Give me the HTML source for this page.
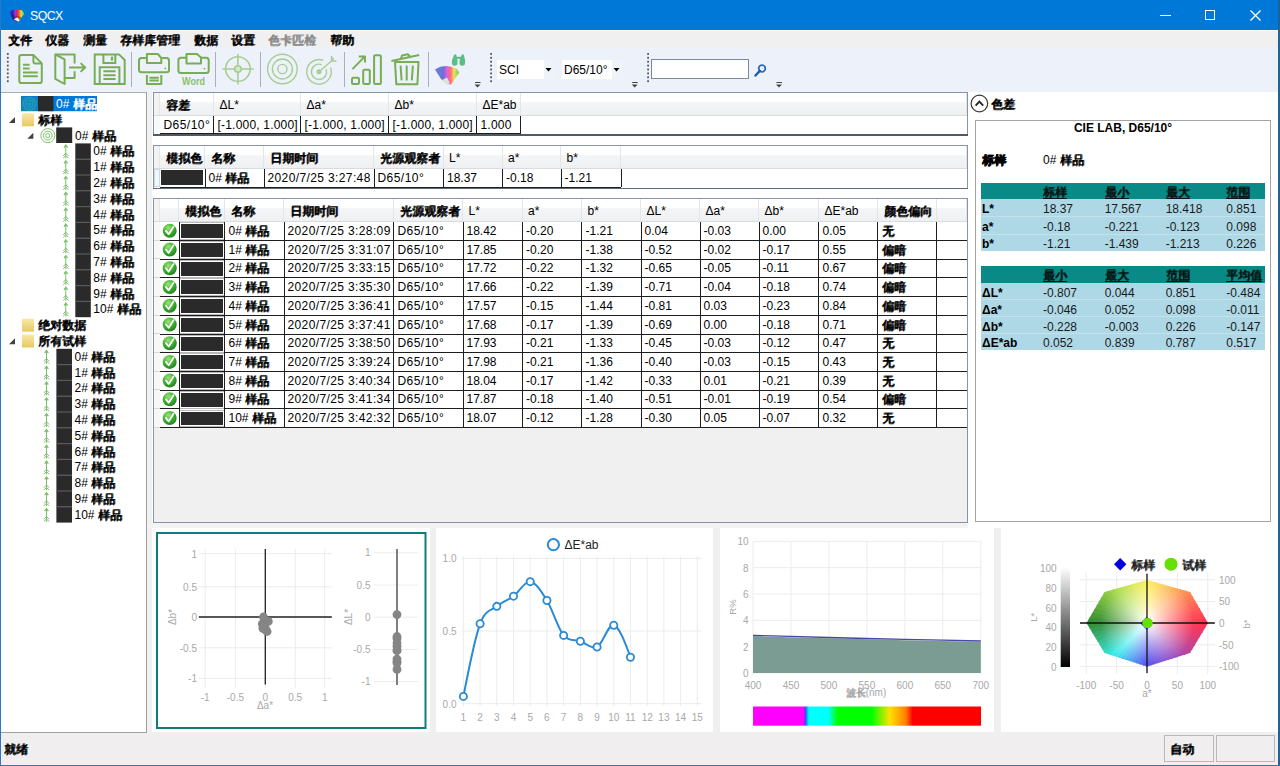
<!DOCTYPE html><html><head><meta charset="utf-8"><title>SQCX</title><style>
*{margin:0;padding:0;box-sizing:border-box}
html,body{width:1280px;height:766px;overflow:hidden}
body{position:relative;background:#f0f0f0;font-family:"Liberation Sans",sans-serif;font-size:12px;color:#000;line-height:1}
.a{position:absolute}
.t{position:absolute;white-space:nowrap}
svg{position:absolute;overflow:visible}
.c{display:inline-block;width:1em;text-align:center;text-shadow:1px 0 0 currentColor,0 1px 0 currentColor}
</style></head><body>
<div class="a" style="left:0px;top:0px;width:1280px;height:30px;background:#0078d7"></div>
<svg style="left:0;top:0" width="40" height="30">
<defs><linearGradient id="ig" gradientUnits="userSpaceOnUse" x1="9" y1="0" x2="24" y2="0">
<stop offset="0" stop-color="#3050e8"/><stop offset=".25" stop-color="#2020b0"/><stop offset=".42" stop-color="#b030e0"/><stop offset=".55" stop-color="#e02040"/><stop offset=".7" stop-color="#f08020"/><stop offset=".8" stop-color="#e0e030"/><stop offset="1" stop-color="#50d850"/></linearGradient>
<linearGradient id="ig2" x1="0" y1="0" x2="0" y2="1"><stop offset="0" stop-color="#000" stop-opacity="0"/><stop offset="1" stop-color="#000" stop-opacity=".55"/></linearGradient></defs>
<path d="M9.2,12.3 Q11,9.8 13.2,9.9 L21.2,9.9 Q23.6,11 24.1,14 L19.5,20.5 L17.5,22 L13,19.5 Z" fill="url(#ig)"/>
<path d="M9.2,12.3 L13,19.5 L17.5,22 L19.5,20.5 L24.1,14 L22,17 L13,15 Z" fill="url(#ig2)"/>
<path d="M13.8,19.2 L17.5,17.2 L19.8,20.1 L18.4,21.7 Z" fill="#f4f4f4"/>
</svg>
<div class="t" style="left:30px;top:9.5px;color:#fff;font-size:12.3px;letter-spacing:-0.55px">SQCX</div>
<svg style="left:1140px;top:0" width="140" height="30">
<line x1="20" y1="15.5" x2="31" y2="15.5" stroke="#fff" stroke-width="1"/>
<rect x="65.5" y="10.5" width="9" height="9" fill="none" stroke="#fff" stroke-width="1"/>
<path d="M110.5,10.5 L120.5,20.5 M120.5,10.5 L110.5,20.5" stroke="#fff" stroke-width="1.3"/>
</svg>
<div class="a" style="left:1px;top:30px;width:1277px;height:1px;background:#f7fbff"></div>
<div class="a" style="left:1px;top:31px;width:1277px;height:16px;background:#f0f0f0"></div>
<div class="t" style="left:8px;top:34px;color:#000"><span class="c">文</span><span class="c">件</span></div>
<div class="t" style="left:45px;top:34px;color:#000"><span class="c">仪</span><span class="c">器</span></div>
<div class="t" style="left:83px;top:34px;color:#000"><span class="c">测</span><span class="c">量</span></div>
<div class="t" style="left:120px;top:34px;color:#000"><span class="c">存</span><span class="c">样</span><span class="c">库</span><span class="c">管</span><span class="c">理</span></div>
<div class="t" style="left:194px;top:34px;color:#000"><span class="c">数</span><span class="c">据</span></div>
<div class="t" style="left:231px;top:34px;color:#000"><span class="c">设</span><span class="c">置</span></div>
<div class="t" style="left:268px;top:34px;color:#8a8a8a"><span class="c">色</span><span class="c">卡</span><span class="c">匹</span><span class="c">检</span></div>
<div class="t" style="left:330px;top:34px;color:#000"><span class="c">帮</span><span class="c">助</span></div>
<div class="a" style="left:1px;top:47px;width:1277px;height:45px;background:#edf2fa"></div>
<svg style="left:0;top:0" width="800" height="95"><rect x="6.9" y="53" width="1.8" height="1.8" fill="#555"/><rect x="6.9" y="56.9" width="1.8" height="1.8" fill="#555"/><rect x="6.9" y="60.8" width="1.8" height="1.8" fill="#555"/><rect x="6.9" y="64.7" width="1.8" height="1.8" fill="#555"/><rect x="6.9" y="68.60000000000001" width="1.8" height="1.8" fill="#555"/><rect x="6.9" y="72.50000000000001" width="1.8" height="1.8" fill="#555"/><rect x="6.9" y="76.40000000000002" width="1.8" height="1.8" fill="#555"/><rect x="6.9" y="80.30000000000003" width="1.8" height="1.8" fill="#555"/><g fill="none" stroke="#77ad55" stroke-width="2" stroke-linejoin="round" stroke-linecap="butt">
<path d="M21.5,55 H33.4 L41.8,63.4 V81 Q41.8,83.1 39.7,83.1 H21.5 Q19.3,83.1 19.3,81 V57.2 Q19.3,55 21.5,55 Z"/>
<path d="M33.4,55 V61.4 Q33.4,63.4 35.4,63.4 H41.8"/>
<path d="M23,64.7 H29.6 M23,68.4 H29.6 M23,72.5 H37.8 M23,76.2 H37.8"/>
</g><g fill="none" stroke="#77ad55" stroke-width="2" stroke-linejoin="round">
<path d="M55.3,54.4 L64.6,59.4 V84 L55.3,78.8 Z"/>
<path d="M55.3,54.4 H74.6 V63.4 M74.6,71.3 V78.1 H64.6"/>
<path d="M69,67.5 H85 M80.6,63.1 L85.2,67.5 L80.6,71.9"/>
</g><g fill="none" stroke="#77ad55" stroke-width="2" stroke-linejoin="miter">
<path d="M94.7,54.4 H119 L124.7,60 V84 H94.7 Z"/>
<path d="M103.4,54.4 V63.1 H115.3 V54.4"/>
<path d="M99.7,84 V67.2 H119.4 V84"/>
<path d="M103.4,71.3 H115.6 M103.4,75.3 H115.6 M103.4,79 H115.6"/>
<path d="M112,56.6 V60.6" stroke-width="2.2"/>
</g><line x1="131.5" y1="52" x2="131.5" y2="87" stroke="#a9b0b9" stroke-width="1"/><g fill="none" stroke="#77ad55" stroke-width="2" stroke-linejoin="round">
<rect x="139" y="58.1" width="30" height="14.1" rx="2.5"/>
<path d="M146.9,58.1 V54 H157.8 L161.3,58 V63.1 H146.9 Z" fill="#eef3fa"/>
<path d="M146.9,75 V84 H161.3 V75"/>
<path d="M149.4,77.8 H158.8 M149.4,80.6 H158.8"/>
</g><circle cx="165.3" cy="68.4" r="0.9" fill="#77ad55"/><g fill="none" stroke="#77ad55" stroke-width="2" stroke-linejoin="round">
<rect x="178.4" y="57.7" width="30.3" height="15.2" rx="2.5"/>
<path d="M186.5,57.7 V53.9 H197 L201,57.4 V63.4 H186.5 Z" fill="#eef3fa"/>
</g><circle cx="204.5" cy="68.6" r="0.9" fill="#77ad55"/>
<text x="193.6" y="84.6" text-anchor="middle" font-family="Liberation Sans" font-weight="bold" font-size="11" fill="#8cbf6c" textLength="23" lengthAdjust="spacingAndGlyphs">Word</text><line x1="215.5" y1="52" x2="215.5" y2="87" stroke="#a9b0b9" stroke-width="1"/><g fill="none" stroke="#a8cc95" stroke-width="1.6">
<circle cx="237.9" cy="69" r="12.3"/>
<path d="M222.4,69 H253.7 M237.9,53.9 V84.5"/>
<circle cx="237.9" cy="69" r="3.3" fill="#d6e8ca"/>
</g><line x1="260.5" y1="52" x2="260.5" y2="87" stroke="#a9b0b9" stroke-width="1"/><g fill="none" stroke="#a8cc95" stroke-width="1.4">
<circle cx="282.4" cy="69" r="14.8"/><circle cx="282.4" cy="69" r="10"/><circle cx="282.4" cy="69" r="4.6"/>
</g><g fill="none" stroke="#a8cc95" stroke-width="1.4">
<path d="M330.56,67.59 A12.3,12.3 0 1 1 323.2,60.24"/>
<path d="M326.14,69.2 A7.6,7.6 0 1 1 321.6,64.66"/>
<circle cx="319" cy="71.8" r="1.8" fill="#a8cc95"/>
<path d="M319,71.8 L332.4,60.2 M331.5,56 V61 H336.5 M333,57.5 V60" />
</g><line x1="344.5" y1="52" x2="344.5" y2="87" stroke="#a9b0b9" stroke-width="1"/><g fill="none" stroke="#77ad55" stroke-width="2" stroke-linejoin="round">
<rect x="352" y="77.8" width="7" height="6.2" rx="1.2"/>
<rect x="363.2" y="69.7" width="6.6" height="14.3" rx="1.2"/>
<rect x="374.1" y="55.3" width="6.8" height="28.7" rx="1.2"/>
<path d="M352.4,69.1 L365,56.4 M358.7,56.4 H365 V62.4"/>
</g><g fill="none" stroke="#77ad55" stroke-width="2" stroke-linejoin="round">
<path d="M391.4,61 L419.2,55"/>
<path d="M401,58.6 L402,55.5 L408,54.3 L410,56.5"/>
<path d="M395,62 H418.5 L417.4,84.2 H396.3 Z"/>
<path d="M400.6,65.6 L401.6,80.4 M406.7,65.6 V80.4 M412.9,65.6 L411.8,80.4"/>
</g><line x1="428.5" y1="52" x2="428.5" y2="87" stroke="#a9b0b9" stroke-width="1"/><defs><linearGradient id="fan" x1="0" y1="0" x2="1" y2="0">
<stop offset="0" stop-color="#6080e0"/><stop offset=".35" stop-color="#7070d0"/><stop offset=".5" stop-color="#e060e0"/><stop offset=".65" stop-color="#ff7070"/><stop offset=".78" stop-color="#f0e060"/><stop offset="1" stop-color="#60d060"/></linearGradient></defs>
<path d="M435,69.5 Q445,63 457,69 L459.3,72.5 L451,84.5 L447,84 L441,79 Z" fill="url(#fan)"/>
<path d="M442,80 L447,77.5 L450,83.5 L446,84.3 Z" fill="#e0e0e0"/>
<path d="M454.2,54.5 h2 l1.3,6 v2.5 a2.8,2.8 0 0 1 -5.6,0 v-2.5 Z" fill="#5cbd86"/>
<path d="M461.8,54.5 h2 l1.3,6 v2.5 a2.8,2.8 0 0 1 -5.6,0 v-2.5 Z" fill="#5cbd86"/>
<rect x="456" y="56.8" width="6" height="2" fill="#5cbd86"/><rect x="475.0" y="82" width="5.5" height="1" fill="#444"/><path d="M474.5,84.5 L480.5,84.5 L477.5,87.5 Z" fill="#444"/><rect x="490.2" y="53" width="1.8" height="1.8" fill="#555"/><rect x="490.2" y="56.9" width="1.8" height="1.8" fill="#555"/><rect x="490.2" y="60.8" width="1.8" height="1.8" fill="#555"/><rect x="490.2" y="64.7" width="1.8" height="1.8" fill="#555"/><rect x="490.2" y="68.60000000000001" width="1.8" height="1.8" fill="#555"/><rect x="490.2" y="72.50000000000001" width="1.8" height="1.8" fill="#555"/><rect x="490.2" y="76.40000000000002" width="1.8" height="1.8" fill="#555"/><rect x="490.2" y="80.30000000000003" width="1.8" height="1.8" fill="#555"/><rect x="632.2" y="82" width="5.5" height="1" fill="#444"/><path d="M631.7,84.5 L637.7,84.5 L634.7,87.5 Z" fill="#444"/><rect x="647.2" y="53" width="1.8" height="1.8" fill="#555"/><rect x="647.2" y="56.9" width="1.8" height="1.8" fill="#555"/><rect x="647.2" y="60.8" width="1.8" height="1.8" fill="#555"/><rect x="647.2" y="64.7" width="1.8" height="1.8" fill="#555"/><rect x="647.2" y="68.60000000000001" width="1.8" height="1.8" fill="#555"/><rect x="647.2" y="72.50000000000001" width="1.8" height="1.8" fill="#555"/><rect x="647.2" y="76.40000000000002" width="1.8" height="1.8" fill="#555"/><rect x="647.2" y="80.30000000000003" width="1.8" height="1.8" fill="#555"/><rect x="776.5" y="82" width="5.5" height="1" fill="#444"/><path d="M776,84.5 L782,84.5 L779,87.5 Z" fill="#444"/><circle cx="762" cy="68.5" r="3.3" fill="none" stroke="#2a6cc0" stroke-width="1.8"/><path d="M759.7,71 L755.5,75.5" stroke="#1e5aa8" stroke-width="2.4" stroke-linecap="round"/></svg>
<div class="a" style="left:497px;top:60px;width:58px;height:19px;background:#fff"></div>
<div class="a" style="left:544px;top:60px;width:11px;height:19px;background:#eef3fa"></div>
<div class="t" style="left:499px;top:64px;font-size:12px">SCI</div>
<div class="a" style="left:562px;top:60px;width:61px;height:19px;background:#fff"></div>
<div class="a" style="left:612px;top:60px;width:11px;height:19px;background:#eef3fa"></div>
<div class="t" style="left:564px;top:64px;font-size:12px">D65/10°</div>
<div class="a" style="left:651px;top:59px;width:98px;height:20px;background:#fff;border:1px solid #7a8a9c"></div>
<svg style="left:0;top:0" width="1" height="1"><path d="M545.5,68 L551.5,68 L548.5,71.5 Z" fill="#000"/><path d="M613.5,68 L619.5,68 L616.5,71.5 Z" fill="#000"/></svg>
<div class="a" style="left:1px;top:92px;width:146px;height:641px;background:#fff;border-top:1px solid #a9aeb5;border-right:1px solid #a0a0a0;border-bottom:1px solid #a0a0a0"></div>
<svg style="left:0;top:0" width="150" height="740"><rect x="21" y="96" width="76" height="15.2" fill="#0078d7"/><rect x="21.5" y="96.5" width="16.5" height="14.5" fill="#1382c4"/><g fill="none" stroke="#22a0b4" stroke-width="1.3"><circle cx="29.5" cy="103.8" r="6.2"/><circle cx="29.5" cy="103.8" r="3.6"/><circle cx="29.5" cy="103.8" r="1.2"/></g><rect x="38" y="96" width="15.4" height="15.2" fill="#2a2a2a"/><defs><linearGradient id="fold" x1="0" y1="0" x2="0" y2="1"><stop offset="0" stop-color="#f8e9a8"/><stop offset="1" stop-color="#e8c860"/></linearGradient></defs><path d="M15,117.0 L15,123.0 L9,123.0 Z" fill="#404040"/><defs></defs><rect x="22" y="113.3" width="12" height="13" fill="url(#fold)"/><path d="M33.3,132.79999999999998 L33.3,138.79999999999998 L27.3,138.79999999999998 Z" fill="#404040"/><g fill="none" stroke="#7cc46a" stroke-width="1"><circle cx="47.8" cy="135.6" r="7"/><circle cx="47.8" cy="135.6" r="4.4"/><circle cx="47.8" cy="135.6" r="2"/></g><rect x="56.2" y="127.39999999999999" width="16" height="15.6" fill="#2a2a2a"/><g stroke="#7cbf68" stroke-width="1" fill="none"><path d="M65.8,144.9 V158.4"/><path d="M64.0,147.6 L65.8,145.20000000000002 L67.6,147.6" stroke-width="1.3"/><path d="M63.199999999999996,155.9 L65.8,153.20000000000002 L68.39999999999999,155.9 M63.199999999999996,158.20000000000002 L65.8,155.6 L68.39999999999999,158.20000000000002"/></g><rect x="75.3" y="143.4" width="15.5" height="15.8" fill="#2a2a2a"/><g stroke="#7cbf68" stroke-width="1" fill="none"><path d="M65.8,160.7 V174.2"/><path d="M64.0,163.39999999999998 L65.8,161.0 L67.6,163.39999999999998" stroke-width="1.3"/><path d="M63.199999999999996,171.7 L65.8,169.0 L68.39999999999999,171.7 M63.199999999999996,174.0 L65.8,171.39999999999998 L68.39999999999999,174.0"/></g><rect x="75.3" y="159.2" width="15.5" height="15.8" fill="#2a2a2a"/><rect x="75.3" y="158.6" width="15.5" height="1.2" fill="#5a5a5a"/><g stroke="#7cbf68" stroke-width="1" fill="none"><path d="M65.8,176.5 V190.0"/><path d="M64.0,179.2 L65.8,176.8 L67.6,179.2" stroke-width="1.3"/><path d="M63.199999999999996,187.5 L65.8,184.8 L68.39999999999999,187.5 M63.199999999999996,189.8 L65.8,187.2 L68.39999999999999,189.8"/></g><rect x="75.3" y="175.0" width="15.5" height="15.8" fill="#2a2a2a"/><rect x="75.3" y="174.4" width="15.5" height="1.2" fill="#5a5a5a"/><g stroke="#7cbf68" stroke-width="1" fill="none"><path d="M65.8,192.3 V205.8"/><path d="M64.0,195.0 L65.8,192.60000000000002 L67.6,195.0" stroke-width="1.3"/><path d="M63.199999999999996,203.3 L65.8,200.60000000000002 L68.39999999999999,203.3 M63.199999999999996,205.60000000000002 L65.8,203.0 L68.39999999999999,205.60000000000002"/></g><rect x="75.3" y="190.8" width="15.5" height="15.8" fill="#2a2a2a"/><rect x="75.3" y="190.2" width="15.5" height="1.2" fill="#5a5a5a"/><g stroke="#7cbf68" stroke-width="1" fill="none"><path d="M65.8,208.10000000000002 V221.60000000000002"/><path d="M64.0,210.8 L65.8,208.40000000000003 L67.6,210.8" stroke-width="1.3"/><path d="M63.199999999999996,219.10000000000002 L65.8,216.40000000000003 L68.39999999999999,219.10000000000002 M63.199999999999996,221.40000000000003 L65.8,218.8 L68.39999999999999,221.40000000000003"/></g><rect x="75.3" y="206.6" width="15.5" height="15.8" fill="#2a2a2a"/><rect x="75.3" y="206.0" width="15.5" height="1.2" fill="#5a5a5a"/><g stroke="#7cbf68" stroke-width="1" fill="none"><path d="M65.8,223.9 V237.4"/><path d="M64.0,226.6 L65.8,224.20000000000002 L67.6,226.6" stroke-width="1.3"/><path d="M63.199999999999996,234.9 L65.8,232.20000000000002 L68.39999999999999,234.9 M63.199999999999996,237.20000000000002 L65.8,234.6 L68.39999999999999,237.20000000000002"/></g><rect x="75.3" y="222.4" width="15.5" height="15.8" fill="#2a2a2a"/><rect x="75.3" y="221.8" width="15.5" height="1.2" fill="#5a5a5a"/><g stroke="#7cbf68" stroke-width="1" fill="none"><path d="M65.8,239.70000000000002 V253.20000000000002"/><path d="M64.0,242.4 L65.8,240.00000000000003 L67.6,242.4" stroke-width="1.3"/><path d="M63.199999999999996,250.70000000000002 L65.8,248.00000000000003 L68.39999999999999,250.70000000000002 M63.199999999999996,253.00000000000003 L65.8,250.4 L68.39999999999999,253.00000000000003"/></g><rect x="75.3" y="238.2" width="15.5" height="15.8" fill="#2a2a2a"/><rect x="75.3" y="237.6" width="15.5" height="1.2" fill="#5a5a5a"/><g stroke="#7cbf68" stroke-width="1" fill="none"><path d="M65.8,255.5 V269.0"/><path d="M64.0,258.2 L65.8,255.8 L67.6,258.2" stroke-width="1.3"/><path d="M63.199999999999996,266.5 L65.8,263.8 L68.39999999999999,266.5 M63.199999999999996,268.8 L65.8,266.2 L68.39999999999999,268.8"/></g><rect x="75.3" y="254.0" width="15.5" height="15.8" fill="#2a2a2a"/><rect x="75.3" y="253.4" width="15.5" height="1.2" fill="#5a5a5a"/><g stroke="#7cbf68" stroke-width="1" fill="none"><path d="M65.8,271.3 V284.8"/><path d="M64.0,274.0 L65.8,271.6 L67.6,274.0" stroke-width="1.3"/><path d="M63.199999999999996,282.3 L65.8,279.6 L68.39999999999999,282.3 M63.199999999999996,284.6 L65.8,282.0 L68.39999999999999,284.6"/></g><rect x="75.3" y="269.8" width="15.5" height="15.8" fill="#2a2a2a"/><rect x="75.3" y="269.2" width="15.5" height="1.2" fill="#5a5a5a"/><g stroke="#7cbf68" stroke-width="1" fill="none"><path d="M65.8,287.1 V300.6"/><path d="M64.0,289.8 L65.8,287.40000000000003 L67.6,289.8" stroke-width="1.3"/><path d="M63.199999999999996,298.1 L65.8,295.40000000000003 L68.39999999999999,298.1 M63.199999999999996,300.40000000000003 L65.8,297.8 L68.39999999999999,300.40000000000003"/></g><rect x="75.3" y="285.6" width="15.5" height="15.8" fill="#2a2a2a"/><rect x="75.3" y="285.0" width="15.5" height="1.2" fill="#5a5a5a"/><g stroke="#7cbf68" stroke-width="1" fill="none"><path d="M65.8,302.9 V316.4"/><path d="M64.0,305.59999999999997 L65.8,303.2 L67.6,305.59999999999997" stroke-width="1.3"/><path d="M63.199999999999996,313.9 L65.8,311.2 L68.39999999999999,313.9 M63.199999999999996,316.2 L65.8,313.59999999999997 L68.39999999999999,316.2"/></g><rect x="75.3" y="301.4" width="15.5" height="15.8" fill="#2a2a2a"/><rect x="75.3" y="300.8" width="15.5" height="1.2" fill="#5a5a5a"/><defs></defs><rect x="22" y="318.70000000000005" width="12" height="13" fill="url(#fold)"/><path d="M15,338.2 L15,344.2 L9,344.2 Z" fill="#404040"/><defs></defs><rect x="22" y="334.5" width="12" height="13" fill="url(#fold)"/><g stroke="#7cbf68" stroke-width="1" fill="none"><path d="M46.5,350.3 V363.8"/><path d="M44.7,353.0 L46.5,350.6 L48.3,353.0" stroke-width="1.3"/><path d="M43.9,361.3 L46.5,358.6 L49.1,361.3 M43.9,363.6 L46.5,361.0 L49.1,363.6"/></g><rect x="56.4" y="348.8" width="15.6" height="15.8" fill="#2a2a2a"/><g stroke="#7cbf68" stroke-width="1" fill="none"><path d="M46.5,366.1 V379.6"/><path d="M44.7,368.8 L46.5,366.40000000000003 L48.3,368.8" stroke-width="1.3"/><path d="M43.9,377.1 L46.5,374.40000000000003 L49.1,377.1 M43.9,379.40000000000003 L46.5,376.8 L49.1,379.40000000000003"/></g><rect x="56.4" y="364.6" width="15.6" height="15.8" fill="#2a2a2a"/><rect x="56.4" y="364.0" width="15.6" height="1.2" fill="#5a5a5a"/><g stroke="#7cbf68" stroke-width="1" fill="none"><path d="M46.5,381.90000000000003 V395.40000000000003"/><path d="M44.7,384.6 L46.5,382.20000000000005 L48.3,384.6" stroke-width="1.3"/><path d="M43.9,392.90000000000003 L46.5,390.20000000000005 L49.1,392.90000000000003 M43.9,395.20000000000005 L46.5,392.6 L49.1,395.20000000000005"/></g><rect x="56.4" y="380.4" width="15.6" height="15.8" fill="#2a2a2a"/><rect x="56.4" y="379.8" width="15.6" height="1.2" fill="#5a5a5a"/><g stroke="#7cbf68" stroke-width="1" fill="none"><path d="M46.5,397.7 V411.2"/><path d="M44.7,400.4 L46.5,398.0 L48.3,400.4" stroke-width="1.3"/><path d="M43.9,408.7 L46.5,406.0 L49.1,408.7 M43.9,411.0 L46.5,408.4 L49.1,411.0"/></g><rect x="56.4" y="396.2" width="15.6" height="15.8" fill="#2a2a2a"/><rect x="56.4" y="395.6" width="15.6" height="1.2" fill="#5a5a5a"/><g stroke="#7cbf68" stroke-width="1" fill="none"><path d="M46.5,413.5 V427.0"/><path d="M44.7,416.2 L46.5,413.8 L48.3,416.2" stroke-width="1.3"/><path d="M43.9,424.5 L46.5,421.8 L49.1,424.5 M43.9,426.8 L46.5,424.2 L49.1,426.8"/></g><rect x="56.4" y="412.0" width="15.6" height="15.8" fill="#2a2a2a"/><rect x="56.4" y="411.4" width="15.6" height="1.2" fill="#5a5a5a"/><g stroke="#7cbf68" stroke-width="1" fill="none"><path d="M46.5,429.3 V442.8"/><path d="M44.7,432.0 L46.5,429.6 L48.3,432.0" stroke-width="1.3"/><path d="M43.9,440.3 L46.5,437.6 L49.1,440.3 M43.9,442.6 L46.5,440.0 L49.1,442.6"/></g><rect x="56.4" y="427.8" width="15.6" height="15.8" fill="#2a2a2a"/><rect x="56.4" y="427.2" width="15.6" height="1.2" fill="#5a5a5a"/><g stroke="#7cbf68" stroke-width="1" fill="none"><path d="M46.5,445.1 V458.6"/><path d="M44.7,447.8 L46.5,445.40000000000003 L48.3,447.8" stroke-width="1.3"/><path d="M43.9,456.1 L46.5,453.40000000000003 L49.1,456.1 M43.9,458.40000000000003 L46.5,455.8 L49.1,458.40000000000003"/></g><rect x="56.4" y="443.6" width="15.6" height="15.8" fill="#2a2a2a"/><rect x="56.4" y="443.0" width="15.6" height="1.2" fill="#5a5a5a"/><g stroke="#7cbf68" stroke-width="1" fill="none"><path d="M46.5,460.90000000000003 V474.40000000000003"/><path d="M44.7,463.6 L46.5,461.20000000000005 L48.3,463.6" stroke-width="1.3"/><path d="M43.9,471.90000000000003 L46.5,469.20000000000005 L49.1,471.90000000000003 M43.9,474.20000000000005 L46.5,471.6 L49.1,474.20000000000005"/></g><rect x="56.4" y="459.4" width="15.6" height="15.8" fill="#2a2a2a"/><rect x="56.4" y="458.8" width="15.6" height="1.2" fill="#5a5a5a"/><g stroke="#7cbf68" stroke-width="1" fill="none"><path d="M46.5,476.70000000000005 V490.20000000000005"/><path d="M44.7,479.40000000000003 L46.5,477.00000000000006 L48.3,479.40000000000003" stroke-width="1.3"/><path d="M43.9,487.70000000000005 L46.5,485.00000000000006 L49.1,487.70000000000005 M43.9,490.00000000000006 L46.5,487.40000000000003 L49.1,490.00000000000006"/></g><rect x="56.4" y="475.2" width="15.6" height="15.8" fill="#2a2a2a"/><rect x="56.4" y="474.6" width="15.6" height="1.2" fill="#5a5a5a"/><g stroke="#7cbf68" stroke-width="1" fill="none"><path d="M46.5,492.5 V506.0"/><path d="M44.7,495.2 L46.5,492.8 L48.3,495.2" stroke-width="1.3"/><path d="M43.9,503.5 L46.5,500.8 L49.1,503.5 M43.9,505.8 L46.5,503.2 L49.1,505.8"/></g><rect x="56.4" y="491.0" width="15.6" height="15.8" fill="#2a2a2a"/><rect x="56.4" y="490.4" width="15.6" height="1.2" fill="#5a5a5a"/><g stroke="#7cbf68" stroke-width="1" fill="none"><path d="M46.5,508.3 V521.8"/><path d="M44.7,511.0 L46.5,508.6 L48.3,511.0" stroke-width="1.3"/><path d="M43.9,519.3 L46.5,516.6 L49.1,519.3 M43.9,521.6 L46.5,519.0 L49.1,521.6"/></g><rect x="56.4" y="506.8" width="15.6" height="15.8" fill="#2a2a2a"/><rect x="56.4" y="506.2" width="15.6" height="1.2" fill="#5a5a5a"/></svg>
<div class="t" style="left:56px;top:98px;color:#fff">0# <span class="c">样</span><span class="c">品</span></div>
<div class="t" style="left:38px;top:114px;"><span class="c">标</span><span class="c">样</span></div>
<div class="t" style="left:75px;top:129.5px;">0# <span class="c">样</span><span class="c">品</span></div>
<div class="t" style="left:93.3px;top:145.4px;">0# <span class="c">样</span><span class="c">品</span></div>
<div class="t" style="left:93.3px;top:161.2px;">1# <span class="c">样</span><span class="c">品</span></div>
<div class="t" style="left:93.3px;top:177.0px;">2# <span class="c">样</span><span class="c">品</span></div>
<div class="t" style="left:93.3px;top:192.8px;">3# <span class="c">样</span><span class="c">品</span></div>
<div class="t" style="left:93.3px;top:208.60000000000002px;">4# <span class="c">样</span><span class="c">品</span></div>
<div class="t" style="left:93.3px;top:224.4px;">5# <span class="c">样</span><span class="c">品</span></div>
<div class="t" style="left:93.3px;top:240.20000000000002px;">6# <span class="c">样</span><span class="c">品</span></div>
<div class="t" style="left:93.3px;top:256.0px;">7# <span class="c">样</span><span class="c">品</span></div>
<div class="t" style="left:93.3px;top:271.8px;">8# <span class="c">样</span><span class="c">品</span></div>
<div class="t" style="left:93.3px;top:287.6px;">9# <span class="c">样</span><span class="c">品</span></div>
<div class="t" style="left:93.3px;top:303.4px;">10# <span class="c">样</span><span class="c">品</span></div>
<div class="t" style="left:37.5px;top:319.20000000000005px;"><span class="c">绝</span><span class="c">对</span><span class="c">数</span><span class="c">据</span></div>
<div class="t" style="left:37.5px;top:335.0px;"><span class="c">所</span><span class="c">有</span><span class="c">试</span><span class="c">样</span></div>
<div class="t" style="left:74.5px;top:350.8px;">0# <span class="c">样</span><span class="c">品</span></div>
<div class="t" style="left:74.5px;top:366.6px;">1# <span class="c">样</span><span class="c">品</span></div>
<div class="t" style="left:74.5px;top:382.40000000000003px;">2# <span class="c">样</span><span class="c">品</span></div>
<div class="t" style="left:74.5px;top:398.2px;">3# <span class="c">样</span><span class="c">品</span></div>
<div class="t" style="left:74.5px;top:414.0px;">4# <span class="c">样</span><span class="c">品</span></div>
<div class="t" style="left:74.5px;top:429.8px;">5# <span class="c">样</span><span class="c">品</span></div>
<div class="t" style="left:74.5px;top:445.6px;">6# <span class="c">样</span><span class="c">品</span></div>
<div class="t" style="left:74.5px;top:461.40000000000003px;">7# <span class="c">样</span><span class="c">品</span></div>
<div class="t" style="left:74.5px;top:477.20000000000005px;">8# <span class="c">样</span><span class="c">品</span></div>
<div class="t" style="left:74.5px;top:493.0px;">9# <span class="c">样</span><span class="c">品</span></div>
<div class="t" style="left:74.5px;top:508.8px;">10# <span class="c">样</span><span class="c">品</span></div>
<div class="a" style="left:152px;top:92px;width:1126px;height:436px;background:#fff"></div>
<div class="a" style="left:153px;top:92px;width:815px;height:43px;border:1px solid #8596aa;border-bottom:none;background:#fff"></div>
<div class="a" style="left:154px;top:93px;width:6px;height:22px;background:#f3f3f3;border-right:1px solid #e3e5e8"></div>
<div class="a" style="left:160px;top:93px;width:54px;height:22px;background:linear-gradient(#ffffff 0%,#ffffff 42%,#f4f5f6 43%,#eff0f2 100%);border-right:1px solid #e3e5e8"></div>
<div class="t" style="left:165.5px;top:98.5px;"><span class="c">容</span><span class="c">差</span></div>
<div class="a" style="left:214px;top:93px;width:87px;height:22px;background:linear-gradient(#ffffff 0%,#ffffff 42%,#f4f5f6 43%,#eff0f2 100%);border-right:1px solid #e3e5e8"></div>
<div class="t" style="left:219.5px;top:98.5px;">ΔL*</div>
<div class="a" style="left:301px;top:93px;width:88px;height:22px;background:linear-gradient(#ffffff 0%,#ffffff 42%,#f4f5f6 43%,#eff0f2 100%);border-right:1px solid #e3e5e8"></div>
<div class="t" style="left:306.5px;top:98.5px;">Δa*</div>
<div class="a" style="left:389px;top:93px;width:88px;height:22px;background:linear-gradient(#ffffff 0%,#ffffff 42%,#f4f5f6 43%,#eff0f2 100%);border-right:1px solid #e3e5e8"></div>
<div class="t" style="left:394.5px;top:98.5px;">Δb*</div>
<div class="a" style="left:477px;top:93px;width:44px;height:22px;background:linear-gradient(#ffffff 0%,#ffffff 42%,#f4f5f6 43%,#eff0f2 100%);border-right:1px solid #e3e5e8"></div>
<div class="t" style="left:482.5px;top:98.5px;">ΔE*ab</div>
<div class="a" style="left:521px;top:93px;width:446px;height:22px;background:linear-gradient(#ffffff 0%,#ffffff 42%,#f4f5f6 43%,#eff0f2 100%);border-right:1px solid #e3e5e8"></div>
<div class="a" style="left:154px;top:115px;width:813px;height:1px;background:#d9dbde"></div>
<div class="a" style="left:154px;top:116px;width:6px;height:18px;background:#f7f9fb"></div>
<div class="t" style="left:163.5px;top:119px;letter-spacing:0.45px">D65/10°</div>
<div class="t" style="left:217.5px;top:119px;letter-spacing:0.2px">[-1.000, 1.000]</div>
<div class="t" style="left:304.5px;top:119px;letter-spacing:0.2px">[-1.000, 1.000]</div>
<div class="t" style="left:392.5px;top:119px;letter-spacing:0.2px">[-1.000, 1.000]</div>
<div class="t" style="left:480.5px;top:119px;letter-spacing:0.2px">1.000</div>
<div class="a" style="left:213px;top:116px;width:1px;height:18px;background:#1e1e1e"></div>
<div class="a" style="left:300px;top:116px;width:1px;height:18px;background:#1e1e1e"></div>
<div class="a" style="left:388px;top:116px;width:1px;height:18px;background:#1e1e1e"></div>
<div class="a" style="left:476px;top:116px;width:1px;height:18px;background:#1e1e1e"></div>
<div class="a" style="left:520px;top:116px;width:1px;height:18px;background:#1e1e1e"></div>
<div class="a" style="left:160px;top:133px;width:361px;height:1px;background:#1e1e1e"></div>
<div class="a" style="left:153px;top:134px;width:815px;height:1.5px;background:#4e5a68"></div>
<div class="a" style="left:153px;top:145px;width:815px;height:44px;border:1px solid #8596aa;border-bottom:none;background:#fff"></div>
<div class="a" style="left:154px;top:146px;width:6px;height:22px;background:#f3f3f3;border-right:1px solid #e3e5e8"></div>
<div class="a" style="left:160px;top:146px;width:45px;height:22px;background:linear-gradient(#ffffff 0%,#ffffff 42%,#f4f5f6 43%,#eff0f2 100%);border-right:1px solid #e3e5e8"></div>
<div class="t" style="left:165.5px;top:151.5px;"><span class="c">模</span><span class="c">拟</span><span class="c">色</span></div>
<div class="a" style="left:205px;top:146px;width:59px;height:22px;background:linear-gradient(#ffffff 0%,#ffffff 42%,#f4f5f6 43%,#eff0f2 100%);border-right:1px solid #e3e5e8"></div>
<div class="t" style="left:210.5px;top:151.5px;"><span class="c">名</span><span class="c">称</span></div>
<div class="a" style="left:264px;top:146px;width:110px;height:22px;background:linear-gradient(#ffffff 0%,#ffffff 42%,#f4f5f6 43%,#eff0f2 100%);border-right:1px solid #e3e5e8"></div>
<div class="t" style="left:269.5px;top:151.5px;"><span class="c">日</span><span class="c">期</span><span class="c">时</span><span class="c">间</span></div>
<div class="a" style="left:374px;top:146px;width:69.5px;height:22px;background:linear-gradient(#ffffff 0%,#ffffff 42%,#f4f5f6 43%,#eff0f2 100%);border-right:1px solid #e3e5e8"></div>
<div class="t" style="left:379.5px;top:151.5px;"><span class="c">光</span><span class="c">源</span><span class="c">观</span><span class="c">察</span><span class="c">者</span></div>
<div class="a" style="left:443.5px;top:146px;width:59.0px;height:22px;background:linear-gradient(#ffffff 0%,#ffffff 42%,#f4f5f6 43%,#eff0f2 100%);border-right:1px solid #e3e5e8"></div>
<div class="t" style="left:449.0px;top:151.5px;">L*</div>
<div class="a" style="left:502.5px;top:146px;width:58.5px;height:22px;background:linear-gradient(#ffffff 0%,#ffffff 42%,#f4f5f6 43%,#eff0f2 100%);border-right:1px solid #e3e5e8"></div>
<div class="t" style="left:508.0px;top:151.5px;">a*</div>
<div class="a" style="left:561px;top:146px;width:60px;height:22px;background:linear-gradient(#ffffff 0%,#ffffff 42%,#f4f5f6 43%,#eff0f2 100%);border-right:1px solid #e3e5e8"></div>
<div class="t" style="left:566.5px;top:151.5px;">b*</div>
<div class="a" style="left:621px;top:146px;width:346px;height:22px;background:linear-gradient(#ffffff 0%,#ffffff 42%,#f4f5f6 43%,#eff0f2 100%);border-right:1px solid #e3e5e8"></div>
<div class="a" style="left:154px;top:168px;width:813px;height:1px;background:#d9dbde"></div>
<div class="a" style="left:154px;top:169px;width:6px;height:18px;background:#f1f7fd;border:1px solid #c7d9ea"></div>
<div class="a" style="left:161px;top:170px;width:42px;height:15px;background:#2a2a2a"></div>
<div class="t" style="left:208.5px;top:172px;">0# <span class="c">样</span><span class="c">品</span></div>
<div class="t" style="left:267.5px;top:172px;letter-spacing:0.38px">2020/7/25 3:27:48</div>
<div class="t" style="left:377.5px;top:172px;letter-spacing:0.45px">D65/10°</div>
<div class="t" style="left:447.0px;top:172px;">18.37</div>
<div class="t" style="left:506.0px;top:172px;">-0.18</div>
<div class="t" style="left:564.5px;top:172px;">-1.21</div>
<div class="a" style="left:204.5px;top:169px;width:1px;height:18px;background:#1e1e1e"></div>
<div class="a" style="left:263.5px;top:169px;width:1px;height:18px;background:#1e1e1e"></div>
<div class="a" style="left:373.5px;top:169px;width:1px;height:18px;background:#1e1e1e"></div>
<div class="a" style="left:443px;top:169px;width:1px;height:18px;background:#1e1e1e"></div>
<div class="a" style="left:502px;top:169px;width:1px;height:18px;background:#1e1e1e"></div>
<div class="a" style="left:560.5px;top:169px;width:1px;height:18px;background:#1e1e1e"></div>
<div class="a" style="left:620.5px;top:169px;width:1px;height:18px;background:#1e1e1e"></div>
<div class="a" style="left:160px;top:186.5px;width:461px;height:1.5px;background:#1e1e1e"></div>
<div class="a" style="left:153px;top:188px;width:815px;height:1px;background:#5c6a7a"></div>
<div class="a" style="left:153px;top:198px;width:815px;height:325px;border:1px solid #8596aa;background:#f0f0f0"></div>
<div class="a" style="left:154px;top:199px;width:6px;height:22px;background:#f3f3f3;border-right:1px solid #e3e5e8"></div>
<div class="a" style="left:160px;top:199px;width:19px;height:22px;background:linear-gradient(#ffffff 0%,#ffffff 42%,#f4f5f6 43%,#eff0f2 100%);border-right:1px solid #e3e5e8"></div>
<div class="a" style="left:179px;top:199px;width:46px;height:22px;background:linear-gradient(#ffffff 0%,#ffffff 42%,#f4f5f6 43%,#eff0f2 100%);border-right:1px solid #e3e5e8"></div>
<div class="t" style="left:184.5px;top:204.5px;"><span class="c">模</span><span class="c">拟</span><span class="c">色</span></div>
<div class="a" style="left:225px;top:199px;width:59px;height:22px;background:linear-gradient(#ffffff 0%,#ffffff 42%,#f4f5f6 43%,#eff0f2 100%);border-right:1px solid #e3e5e8"></div>
<div class="t" style="left:230.5px;top:204.5px;"><span class="c">名</span><span class="c">称</span></div>
<div class="a" style="left:284px;top:199px;width:110px;height:22px;background:linear-gradient(#ffffff 0%,#ffffff 42%,#f4f5f6 43%,#eff0f2 100%);border-right:1px solid #e3e5e8"></div>
<div class="t" style="left:289.5px;top:204.5px;"><span class="c">日</span><span class="c">期</span><span class="c">时</span><span class="c">间</span></div>
<div class="a" style="left:394px;top:199px;width:69px;height:22px;background:linear-gradient(#ffffff 0%,#ffffff 42%,#f4f5f6 43%,#eff0f2 100%);border-right:1px solid #e3e5e8"></div>
<div class="t" style="left:399.5px;top:204.5px;"><span class="c">光</span><span class="c">源</span><span class="c">观</span><span class="c">察</span><span class="c">者</span></div>
<div class="a" style="left:463px;top:199px;width:59.5px;height:22px;background:linear-gradient(#ffffff 0%,#ffffff 42%,#f4f5f6 43%,#eff0f2 100%);border-right:1px solid #e3e5e8"></div>
<div class="t" style="left:468.5px;top:204.5px;">L*</div>
<div class="a" style="left:522.5px;top:199px;width:59.5px;height:22px;background:linear-gradient(#ffffff 0%,#ffffff 42%,#f4f5f6 43%,#eff0f2 100%);border-right:1px solid #e3e5e8"></div>
<div class="t" style="left:528.0px;top:204.5px;">a*</div>
<div class="a" style="left:582px;top:199px;width:59px;height:22px;background:linear-gradient(#ffffff 0%,#ffffff 42%,#f4f5f6 43%,#eff0f2 100%);border-right:1px solid #e3e5e8"></div>
<div class="t" style="left:587.5px;top:204.5px;">b*</div>
<div class="a" style="left:641px;top:199px;width:59px;height:22px;background:linear-gradient(#ffffff 0%,#ffffff 42%,#f4f5f6 43%,#eff0f2 100%);border-right:1px solid #e3e5e8"></div>
<div class="t" style="left:646.5px;top:204.5px;">ΔL*</div>
<div class="a" style="left:700px;top:199px;width:59px;height:22px;background:linear-gradient(#ffffff 0%,#ffffff 42%,#f4f5f6 43%,#eff0f2 100%);border-right:1px solid #e3e5e8"></div>
<div class="t" style="left:705.5px;top:204.5px;">Δa*</div>
<div class="a" style="left:759px;top:199px;width:60px;height:22px;background:linear-gradient(#ffffff 0%,#ffffff 42%,#f4f5f6 43%,#eff0f2 100%);border-right:1px solid #e3e5e8"></div>
<div class="t" style="left:764.5px;top:204.5px;">Δb*</div>
<div class="a" style="left:819px;top:199px;width:59px;height:22px;background:linear-gradient(#ffffff 0%,#ffffff 42%,#f4f5f6 43%,#eff0f2 100%);border-right:1px solid #e3e5e8"></div>
<div class="t" style="left:824.5px;top:204.5px;">ΔE*ab</div>
<div class="a" style="left:878px;top:199px;width:59px;height:22px;background:linear-gradient(#ffffff 0%,#ffffff 42%,#f4f5f6 43%,#eff0f2 100%);border-right:1px solid #e3e5e8"></div>
<div class="t" style="left:883.5px;top:204.5px;"><span class="c">颜</span><span class="c">色</span><span class="c">偏</span><span class="c">向</span></div>
<div class="a" style="left:937px;top:199px;width:30px;height:22px;background:linear-gradient(#ffffff 0%,#ffffff 42%,#f4f5f6 43%,#eff0f2 100%);border-right:1px solid #e3e5e8"></div>
<div class="a" style="left:154px;top:221px;width:813px;height:1px;background:#d9dbde"></div>
<div class="a" style="left:160px;top:222px;width:807px;height:205px;background:#fff"></div>
<div class="a" style="left:154px;top:222px;width:6px;height:205.92px;background:#f7f7f7"></div>
<div class="a" style="left:154px;top:239.72px;width:6px;height:1px;background:#d8d8d8"></div>
<div class="a" style="left:160px;top:240px;width:807px;height:1px;background:#1e1e1e"></div>
<div class="a" style="left:180.3px;top:223.3px;width:43.4px;height:15.919999999999998px;background:#2a2a2a;border:1px solid #fff;outline:1px solid #b8b8b8"></div>
<div class="t" style="left:228.5px;top:225.0px;">0# <span class="c">样</span><span class="c">品</span></div>
<div class="t" style="left:287.5px;top:225.0px;letter-spacing:0.38px">2020/7/25 3:28:09</div>
<div class="t" style="left:397.5px;top:225.0px;letter-spacing:0.45px">D65/10°</div>
<div class="t" style="left:466.5px;top:225.0px;">18.42</div>
<div class="t" style="left:526.0px;top:225.0px;">-0.20</div>
<div class="t" style="left:585.5px;top:225.0px;">-1.21</div>
<div class="t" style="left:644.5px;top:225.0px;">0.04</div>
<div class="t" style="left:703.5px;top:225.0px;">-0.03</div>
<div class="t" style="left:762.5px;top:225.0px;">0.00</div>
<div class="t" style="left:822.5px;top:225.0px;">0.05</div>
<div class="t" style="left:881.5px;top:225.0px;"><span class="c">无</span></div>
<div class="a" style="left:154px;top:258.44px;width:6px;height:1px;background:#d8d8d8"></div>
<div class="a" style="left:160px;top:259px;width:807px;height:1px;background:#1e1e1e"></div>
<div class="a" style="left:180.3px;top:242.02px;width:43.4px;height:15.919999999999998px;background:#2a2a2a;border:1px solid #fff;outline:1px solid #b8b8b8"></div>
<div class="t" style="left:228.5px;top:243.72px;">1# <span class="c">样</span><span class="c">品</span></div>
<div class="t" style="left:287.5px;top:243.72px;letter-spacing:0.38px">2020/7/25 3:31:07</div>
<div class="t" style="left:397.5px;top:243.72px;letter-spacing:0.45px">D65/10°</div>
<div class="t" style="left:466.5px;top:243.72px;">17.85</div>
<div class="t" style="left:526.0px;top:243.72px;">-0.20</div>
<div class="t" style="left:585.5px;top:243.72px;">-1.38</div>
<div class="t" style="left:644.5px;top:243.72px;">-0.52</div>
<div class="t" style="left:703.5px;top:243.72px;">-0.02</div>
<div class="t" style="left:762.5px;top:243.72px;">-0.17</div>
<div class="t" style="left:822.5px;top:243.72px;">0.55</div>
<div class="t" style="left:881.5px;top:243.72px;"><span class="c">偏</span><span class="c">暗</span></div>
<div class="a" style="left:154px;top:277.15999999999997px;width:6px;height:1px;background:#d8d8d8"></div>
<div class="a" style="left:160px;top:277px;width:807px;height:1px;background:#1e1e1e"></div>
<div class="a" style="left:180.3px;top:260.74px;width:43.4px;height:15.919999999999998px;background:#2a2a2a;border:1px solid #fff;outline:1px solid #b8b8b8"></div>
<div class="t" style="left:228.5px;top:262.44px;">2# <span class="c">样</span><span class="c">品</span></div>
<div class="t" style="left:287.5px;top:262.44px;letter-spacing:0.38px">2020/7/25 3:33:15</div>
<div class="t" style="left:397.5px;top:262.44px;letter-spacing:0.45px">D65/10°</div>
<div class="t" style="left:466.5px;top:262.44px;">17.72</div>
<div class="t" style="left:526.0px;top:262.44px;">-0.22</div>
<div class="t" style="left:585.5px;top:262.44px;">-1.32</div>
<div class="t" style="left:644.5px;top:262.44px;">-0.65</div>
<div class="t" style="left:703.5px;top:262.44px;">-0.05</div>
<div class="t" style="left:762.5px;top:262.44px;">-0.11</div>
<div class="t" style="left:822.5px;top:262.44px;">0.67</div>
<div class="t" style="left:881.5px;top:262.44px;"><span class="c">偏</span><span class="c">暗</span></div>
<div class="a" style="left:154px;top:295.88px;width:6px;height:1px;background:#d8d8d8"></div>
<div class="a" style="left:160px;top:296px;width:807px;height:1px;background:#1e1e1e"></div>
<div class="a" style="left:180.3px;top:279.46px;width:43.4px;height:15.919999999999998px;background:#2a2a2a;border:1px solid #fff;outline:1px solid #b8b8b8"></div>
<div class="t" style="left:228.5px;top:281.15999999999997px;">3# <span class="c">样</span><span class="c">品</span></div>
<div class="t" style="left:287.5px;top:281.15999999999997px;letter-spacing:0.38px">2020/7/25 3:35:30</div>
<div class="t" style="left:397.5px;top:281.15999999999997px;letter-spacing:0.45px">D65/10°</div>
<div class="t" style="left:466.5px;top:281.15999999999997px;">17.66</div>
<div class="t" style="left:526.0px;top:281.15999999999997px;">-0.22</div>
<div class="t" style="left:585.5px;top:281.15999999999997px;">-1.39</div>
<div class="t" style="left:644.5px;top:281.15999999999997px;">-0.71</div>
<div class="t" style="left:703.5px;top:281.15999999999997px;">-0.04</div>
<div class="t" style="left:762.5px;top:281.15999999999997px;">-0.18</div>
<div class="t" style="left:822.5px;top:281.15999999999997px;">0.74</div>
<div class="t" style="left:881.5px;top:281.15999999999997px;"><span class="c">偏</span><span class="c">暗</span></div>
<div class="a" style="left:154px;top:314.6px;width:6px;height:1px;background:#d8d8d8"></div>
<div class="a" style="left:160px;top:315px;width:807px;height:1px;background:#1e1e1e"></div>
<div class="a" style="left:180.3px;top:298.18px;width:43.4px;height:15.919999999999998px;background:#2a2a2a;border:1px solid #fff;outline:1px solid #b8b8b8"></div>
<div class="t" style="left:228.5px;top:299.88px;">4# <span class="c">样</span><span class="c">品</span></div>
<div class="t" style="left:287.5px;top:299.88px;letter-spacing:0.38px">2020/7/25 3:36:41</div>
<div class="t" style="left:397.5px;top:299.88px;letter-spacing:0.45px">D65/10°</div>
<div class="t" style="left:466.5px;top:299.88px;">17.57</div>
<div class="t" style="left:526.0px;top:299.88px;">-0.15</div>
<div class="t" style="left:585.5px;top:299.88px;">-1.44</div>
<div class="t" style="left:644.5px;top:299.88px;">-0.81</div>
<div class="t" style="left:703.5px;top:299.88px;">0.03</div>
<div class="t" style="left:762.5px;top:299.88px;">-0.23</div>
<div class="t" style="left:822.5px;top:299.88px;">0.84</div>
<div class="t" style="left:881.5px;top:299.88px;"><span class="c">偏</span><span class="c">暗</span></div>
<div class="a" style="left:154px;top:333.32000000000005px;width:6px;height:1px;background:#d8d8d8"></div>
<div class="a" style="left:160px;top:334px;width:807px;height:1px;background:#1e1e1e"></div>
<div class="a" style="left:180.3px;top:316.90000000000003px;width:43.4px;height:15.919999999999998px;background:#2a2a2a;border:1px solid #fff;outline:1px solid #b8b8b8"></div>
<div class="t" style="left:228.5px;top:318.6px;">5# <span class="c">样</span><span class="c">品</span></div>
<div class="t" style="left:287.5px;top:318.6px;letter-spacing:0.38px">2020/7/25 3:37:41</div>
<div class="t" style="left:397.5px;top:318.6px;letter-spacing:0.45px">D65/10°</div>
<div class="t" style="left:466.5px;top:318.6px;">17.68</div>
<div class="t" style="left:526.0px;top:318.6px;">-0.17</div>
<div class="t" style="left:585.5px;top:318.6px;">-1.39</div>
<div class="t" style="left:644.5px;top:318.6px;">-0.69</div>
<div class="t" style="left:703.5px;top:318.6px;">0.00</div>
<div class="t" style="left:762.5px;top:318.6px;">-0.18</div>
<div class="t" style="left:822.5px;top:318.6px;">0.71</div>
<div class="t" style="left:881.5px;top:318.6px;"><span class="c">偏</span><span class="c">暗</span></div>
<div class="a" style="left:154px;top:352.03999999999996px;width:6px;height:1px;background:#d8d8d8"></div>
<div class="a" style="left:160px;top:352px;width:807px;height:1px;background:#1e1e1e"></div>
<div class="a" style="left:180.3px;top:335.62px;width:43.4px;height:15.919999999999998px;background:#2a2a2a;border:1px solid #fff;outline:1px solid #b8b8b8"></div>
<div class="t" style="left:228.5px;top:337.32px;">6# <span class="c">样</span><span class="c">品</span></div>
<div class="t" style="left:287.5px;top:337.32px;letter-spacing:0.38px">2020/7/25 3:38:50</div>
<div class="t" style="left:397.5px;top:337.32px;letter-spacing:0.45px">D65/10°</div>
<div class="t" style="left:466.5px;top:337.32px;">17.93</div>
<div class="t" style="left:526.0px;top:337.32px;">-0.21</div>
<div class="t" style="left:585.5px;top:337.32px;">-1.33</div>
<div class="t" style="left:644.5px;top:337.32px;">-0.45</div>
<div class="t" style="left:703.5px;top:337.32px;">-0.03</div>
<div class="t" style="left:762.5px;top:337.32px;">-0.12</div>
<div class="t" style="left:822.5px;top:337.32px;">0.47</div>
<div class="t" style="left:881.5px;top:337.32px;"><span class="c">无</span></div>
<div class="a" style="left:154px;top:370.76px;width:6px;height:1px;background:#d8d8d8"></div>
<div class="a" style="left:160px;top:371px;width:807px;height:1px;background:#1e1e1e"></div>
<div class="a" style="left:180.3px;top:354.34px;width:43.4px;height:15.919999999999998px;background:#2a2a2a;border:1px solid #fff;outline:1px solid #b8b8b8"></div>
<div class="t" style="left:228.5px;top:356.03999999999996px;">7# <span class="c">样</span><span class="c">品</span></div>
<div class="t" style="left:287.5px;top:356.03999999999996px;letter-spacing:0.38px">2020/7/25 3:39:24</div>
<div class="t" style="left:397.5px;top:356.03999999999996px;letter-spacing:0.45px">D65/10°</div>
<div class="t" style="left:466.5px;top:356.03999999999996px;">17.98</div>
<div class="t" style="left:526.0px;top:356.03999999999996px;">-0.21</div>
<div class="t" style="left:585.5px;top:356.03999999999996px;">-1.36</div>
<div class="t" style="left:644.5px;top:356.03999999999996px;">-0.40</div>
<div class="t" style="left:703.5px;top:356.03999999999996px;">-0.03</div>
<div class="t" style="left:762.5px;top:356.03999999999996px;">-0.15</div>
<div class="t" style="left:822.5px;top:356.03999999999996px;">0.43</div>
<div class="t" style="left:881.5px;top:356.03999999999996px;"><span class="c">无</span></div>
<div class="a" style="left:154px;top:389.48px;width:6px;height:1px;background:#d8d8d8"></div>
<div class="a" style="left:160px;top:390px;width:807px;height:1px;background:#1e1e1e"></div>
<div class="a" style="left:180.3px;top:373.06px;width:43.4px;height:15.919999999999998px;background:#2a2a2a;border:1px solid #fff;outline:1px solid #b8b8b8"></div>
<div class="t" style="left:228.5px;top:374.76px;">8# <span class="c">样</span><span class="c">品</span></div>
<div class="t" style="left:287.5px;top:374.76px;letter-spacing:0.38px">2020/7/25 3:40:34</div>
<div class="t" style="left:397.5px;top:374.76px;letter-spacing:0.45px">D65/10°</div>
<div class="t" style="left:466.5px;top:374.76px;">18.04</div>
<div class="t" style="left:526.0px;top:374.76px;">-0.17</div>
<div class="t" style="left:585.5px;top:374.76px;">-1.42</div>
<div class="t" style="left:644.5px;top:374.76px;">-0.33</div>
<div class="t" style="left:703.5px;top:374.76px;">0.01</div>
<div class="t" style="left:762.5px;top:374.76px;">-0.21</div>
<div class="t" style="left:822.5px;top:374.76px;">0.39</div>
<div class="t" style="left:881.5px;top:374.76px;"><span class="c">无</span></div>
<div class="a" style="left:154px;top:408.20000000000005px;width:6px;height:1px;background:#d8d8d8"></div>
<div class="a" style="left:160px;top:408px;width:807px;height:1px;background:#1e1e1e"></div>
<div class="a" style="left:180.3px;top:391.78000000000003px;width:43.4px;height:15.919999999999998px;background:#2a2a2a;border:1px solid #fff;outline:1px solid #b8b8b8"></div>
<div class="t" style="left:228.5px;top:393.48px;">9# <span class="c">样</span><span class="c">品</span></div>
<div class="t" style="left:287.5px;top:393.48px;letter-spacing:0.38px">2020/7/25 3:41:34</div>
<div class="t" style="left:397.5px;top:393.48px;letter-spacing:0.45px">D65/10°</div>
<div class="t" style="left:466.5px;top:393.48px;">17.87</div>
<div class="t" style="left:526.0px;top:393.48px;">-0.18</div>
<div class="t" style="left:585.5px;top:393.48px;">-1.40</div>
<div class="t" style="left:644.5px;top:393.48px;">-0.51</div>
<div class="t" style="left:703.5px;top:393.48px;">-0.01</div>
<div class="t" style="left:762.5px;top:393.48px;">-0.19</div>
<div class="t" style="left:822.5px;top:393.48px;">0.54</div>
<div class="t" style="left:881.5px;top:393.48px;"><span class="c">偏</span><span class="c">暗</span></div>
<div class="a" style="left:154px;top:426.91999999999996px;width:6px;height:1px;background:#d8d8d8"></div>
<div class="a" style="left:160px;top:427px;width:807px;height:1px;background:#1e1e1e"></div>
<div class="a" style="left:180.3px;top:410.5px;width:43.4px;height:15.919999999999998px;background:#2a2a2a;border:1px solid #fff;outline:1px solid #b8b8b8"></div>
<div class="t" style="left:228.5px;top:412.2px;">10# <span class="c">样</span><span class="c">品</span></div>
<div class="t" style="left:287.5px;top:412.2px;letter-spacing:0.38px">2020/7/25 3:42:32</div>
<div class="t" style="left:397.5px;top:412.2px;letter-spacing:0.45px">D65/10°</div>
<div class="t" style="left:466.5px;top:412.2px;">18.07</div>
<div class="t" style="left:526.0px;top:412.2px;">-0.12</div>
<div class="t" style="left:585.5px;top:412.2px;">-1.28</div>
<div class="t" style="left:644.5px;top:412.2px;">-0.30</div>
<div class="t" style="left:703.5px;top:412.2px;">0.05</div>
<div class="t" style="left:762.5px;top:412.2px;">-0.07</div>
<div class="t" style="left:822.5px;top:412.2px;">0.32</div>
<div class="t" style="left:881.5px;top:412.2px;"><span class="c">无</span></div>
<div class="a" style="left:179px;top:222px;width:1px;height:206px;background:#1e1e1e"></div>
<div class="a" style="left:224px;top:222px;width:1px;height:206px;background:#1e1e1e"></div>
<div class="a" style="left:284px;top:222px;width:1px;height:206px;background:#1e1e1e"></div>
<div class="a" style="left:393px;top:222px;width:1px;height:206px;background:#1e1e1e"></div>
<div class="a" style="left:463px;top:222px;width:1px;height:206px;background:#1e1e1e"></div>
<div class="a" style="left:522px;top:222px;width:1px;height:206px;background:#1e1e1e"></div>
<div class="a" style="left:581px;top:222px;width:1px;height:206px;background:#1e1e1e"></div>
<div class="a" style="left:641px;top:222px;width:1px;height:206px;background:#1e1e1e"></div>
<div class="a" style="left:700px;top:222px;width:1px;height:206px;background:#1e1e1e"></div>
<div class="a" style="left:759px;top:222px;width:1px;height:206px;background:#1e1e1e"></div>
<div class="a" style="left:818px;top:222px;width:1px;height:206px;background:#1e1e1e"></div>
<div class="a" style="left:877px;top:222px;width:1px;height:206px;background:#1e1e1e"></div>
<div class="a" style="left:936px;top:222px;width:1px;height:206px;background:#1e1e1e"></div>
<svg style="left:0;top:0" width="1" height="1"><defs><radialGradient id="cg" cx=".4" cy=".3" r=".75"><stop offset="0" stop-color="#9de27a"/><stop offset=".55" stop-color="#3cb030"/><stop offset="1" stop-color="#1e7a1e"/></radialGradient></defs><circle cx="169.7" cy="230.86" r="7" fill="url(#cg)"/><path d="M166,230.86 L168.7,234.16 L173.5,226.66" fill="none" stroke="#fff" stroke-width="1.8" stroke-linecap="round" stroke-linejoin="round"/><circle cx="169.7" cy="249.58" r="7" fill="url(#cg)"/><path d="M166,249.58 L168.7,252.88 L173.5,245.38" fill="none" stroke="#fff" stroke-width="1.8" stroke-linecap="round" stroke-linejoin="round"/><circle cx="169.7" cy="268.30" r="7" fill="url(#cg)"/><path d="M166,268.30 L168.7,271.60 L173.5,264.10" fill="none" stroke="#fff" stroke-width="1.8" stroke-linecap="round" stroke-linejoin="round"/><circle cx="169.7" cy="287.02" r="7" fill="url(#cg)"/><path d="M166,287.02 L168.7,290.32 L173.5,282.82" fill="none" stroke="#fff" stroke-width="1.8" stroke-linecap="round" stroke-linejoin="round"/><circle cx="169.7" cy="305.74" r="7" fill="url(#cg)"/><path d="M166,305.74 L168.7,309.04 L173.5,301.54" fill="none" stroke="#fff" stroke-width="1.8" stroke-linecap="round" stroke-linejoin="round"/><circle cx="169.7" cy="324.46" r="7" fill="url(#cg)"/><path d="M166,324.46 L168.7,327.76 L173.5,320.26" fill="none" stroke="#fff" stroke-width="1.8" stroke-linecap="round" stroke-linejoin="round"/><circle cx="169.7" cy="343.18" r="7" fill="url(#cg)"/><path d="M166,343.18 L168.7,346.48 L173.5,338.98" fill="none" stroke="#fff" stroke-width="1.8" stroke-linecap="round" stroke-linejoin="round"/><circle cx="169.7" cy="361.90" r="7" fill="url(#cg)"/><path d="M166,361.90 L168.7,365.20 L173.5,357.70" fill="none" stroke="#fff" stroke-width="1.8" stroke-linecap="round" stroke-linejoin="round"/><circle cx="169.7" cy="380.62" r="7" fill="url(#cg)"/><path d="M166,380.62 L168.7,383.92 L173.5,376.42" fill="none" stroke="#fff" stroke-width="1.8" stroke-linecap="round" stroke-linejoin="round"/><circle cx="169.7" cy="399.34" r="7" fill="url(#cg)"/><path d="M166,399.34 L168.7,402.64 L173.5,395.14" fill="none" stroke="#fff" stroke-width="1.8" stroke-linecap="round" stroke-linejoin="round"/><circle cx="169.7" cy="418.06" r="7" fill="url(#cg)"/><path d="M166,418.06 L168.7,421.36 L173.5,413.86" fill="none" stroke="#fff" stroke-width="1.8" stroke-linecap="round" stroke-linejoin="round"/></svg>
<svg style="left:0;top:0" width="1" height="1"><circle cx="979.4" cy="103.5" r="8.3" fill="#fff" stroke="#3a3a3a" stroke-width="1.2"/><path d="M975.6,105.6 L979.4,101.6 L983.2,105.6" fill="none" stroke="#222" stroke-width="1.8"/></svg>
<div class="t" style="left:991px;top:97.5px;"><span class="c">色</span><span class="c">差</span></div>
<div class="a" style="left:975px;top:120px;width:296px;height:402px;border:1px solid #a3a3a3;background:#fff"></div>
<div class="t" style="left:1072px;top:122px;font-weight:bold;width:102px;text-align:center">CIE LAB, D65/10°</div>
<div class="t" style="left:982px;top:153.5px;font-weight:bold"><span class="c">标</span><span class="c">样</span></div>
<div class="t" style="left:1043px;top:153.5px;">0# <span class="c">样</span><span class="c">品</span></div>
<div class="a" style="left:981px;top:183px;width:284px;height:16.2px;background:#0a8a86"></div>
<div class="t" style="left:1043px;top:185.5px;color:#061414;border-bottom:1px solid #061414;height:13px"><span class="c">标</span><span class="c">样</span></div>
<div class="t" style="left:1104.7px;top:185.5px;color:#061414;border-bottom:1px solid #061414;height:13px"><span class="c">最</span><span class="c">小</span></div>
<div class="t" style="left:1165.7px;top:185.5px;color:#061414;border-bottom:1px solid #061414;height:13px"><span class="c">最</span><span class="c">大</span></div>
<div class="t" style="left:1226.3px;top:185.5px;color:#061414;border-bottom:1px solid #061414;height:13px"><span class="c">范</span><span class="c">围</span></div>
<div class="a" style="left:981px;top:199.2px;width:284px;height:17.2px;background:#aed8e6"></div>
<div class="t" style="left:982px;top:203.39999999999998px;font-weight:bold">L*</div>
<div class="t" style="left:1043px;top:203.39999999999998px;color:#1a1a1a">18.37</div>
<div class="t" style="left:1104.7px;top:203.39999999999998px;color:#1a1a1a">17.567</div>
<div class="t" style="left:1165.7px;top:203.39999999999998px;color:#1a1a1a">18.418</div>
<div class="t" style="left:1226.3px;top:203.39999999999998px;color:#1a1a1a">0.851</div>
<div class="a" style="left:981px;top:216.39999999999998px;width:284px;height:17.2px;background:#aed8e6;border-top:1px solid #c2e2ec"></div>
<div class="t" style="left:982px;top:220.59999999999997px;font-weight:bold">a*</div>
<div class="t" style="left:1043px;top:220.59999999999997px;color:#1a1a1a">-0.18</div>
<div class="t" style="left:1104.7px;top:220.59999999999997px;color:#1a1a1a">-0.221</div>
<div class="t" style="left:1165.7px;top:220.59999999999997px;color:#1a1a1a">-0.123</div>
<div class="t" style="left:1226.3px;top:220.59999999999997px;color:#1a1a1a">0.098</div>
<div class="a" style="left:981px;top:233.6px;width:284px;height:17.2px;background:#aed8e6;border-top:1px solid #c2e2ec"></div>
<div class="t" style="left:982px;top:237.79999999999998px;font-weight:bold">b*</div>
<div class="t" style="left:1043px;top:237.79999999999998px;color:#1a1a1a">-1.21</div>
<div class="t" style="left:1104.7px;top:237.79999999999998px;color:#1a1a1a">-1.439</div>
<div class="t" style="left:1165.7px;top:237.79999999999998px;color:#1a1a1a">-1.213</div>
<div class="t" style="left:1226.3px;top:237.79999999999998px;color:#1a1a1a">0.226</div>
<div class="a" style="left:981px;top:266px;width:284px;height:16.6px;background:#0a8a86"></div>
<div class="t" style="left:1043px;top:268.5px;color:#061414;border-bottom:1px solid #061414;height:13px"><span class="c">最</span><span class="c">小</span></div>
<div class="t" style="left:1104.7px;top:268.5px;color:#061414;border-bottom:1px solid #061414;height:13px"><span class="c">最</span><span class="c">大</span></div>
<div class="t" style="left:1165.7px;top:268.5px;color:#061414;border-bottom:1px solid #061414;height:13px"><span class="c">范</span><span class="c">围</span></div>
<div class="t" style="left:1226.3px;top:268.5px;color:#061414;border-bottom:1px solid #061414;height:13px"><span class="c">平</span><span class="c">均</span><span class="c">值</span></div>
<div class="a" style="left:981px;top:282.6px;width:284px;height:16.85px;background:#aed8e6"></div>
<div class="t" style="left:982px;top:286.8px;font-weight:bold">ΔL*</div>
<div class="t" style="left:1043px;top:286.8px;color:#1a1a1a">-0.807</div>
<div class="t" style="left:1104.7px;top:286.8px;color:#1a1a1a">0.044</div>
<div class="t" style="left:1165.7px;top:286.8px;color:#1a1a1a">0.851</div>
<div class="t" style="left:1226.3px;top:286.8px;color:#1a1a1a">-0.484</div>
<div class="a" style="left:981px;top:299.45000000000005px;width:284px;height:16.85px;background:#aed8e6;border-top:1px solid #c2e2ec"></div>
<div class="t" style="left:982px;top:303.65000000000003px;font-weight:bold">Δa*</div>
<div class="t" style="left:1043px;top:303.65000000000003px;color:#1a1a1a">-0.046</div>
<div class="t" style="left:1104.7px;top:303.65000000000003px;color:#1a1a1a">0.052</div>
<div class="t" style="left:1165.7px;top:303.65000000000003px;color:#1a1a1a">0.098</div>
<div class="t" style="left:1226.3px;top:303.65000000000003px;color:#1a1a1a">-0.011</div>
<div class="a" style="left:981px;top:316.3px;width:284px;height:16.85px;background:#aed8e6;border-top:1px solid #c2e2ec"></div>
<div class="t" style="left:982px;top:320.5px;font-weight:bold">Δb*</div>
<div class="t" style="left:1043px;top:320.5px;color:#1a1a1a">-0.228</div>
<div class="t" style="left:1104.7px;top:320.5px;color:#1a1a1a">-0.003</div>
<div class="t" style="left:1165.7px;top:320.5px;color:#1a1a1a">0.226</div>
<div class="t" style="left:1226.3px;top:320.5px;color:#1a1a1a">-0.147</div>
<div class="a" style="left:981px;top:333.15000000000003px;width:284px;height:16.85px;background:#aed8e6;border-top:1px solid #c2e2ec"></div>
<div class="t" style="left:982px;top:337.35px;font-weight:bold">ΔE*ab</div>
<div class="t" style="left:1043px;top:337.35px;color:#1a1a1a">0.052</div>
<div class="t" style="left:1104.7px;top:337.35px;color:#1a1a1a">0.839</div>
<div class="t" style="left:1165.7px;top:337.35px;color:#1a1a1a">0.787</div>
<div class="t" style="left:1226.3px;top:337.35px;color:#1a1a1a">0.517</div>
<div class="a" style="left:1px;top:733px;width:1277px;height:32px;background:#f0eeee"></div>
<div class="t" style="left:4px;top:743px;"><span class="c">就</span><span class="c">绪</span></div>
<div class="a" style="left:1164px;top:735px;width:50px;height:27px;border:1px solid #b9b9b9;background:#f0eeee"></div>
<div class="t" style="left:1170px;top:742.5px;"><span class="c">自</span><span class="c">动</span></div>
<div class="a" style="left:1216px;top:735px;width:59px;height:27px;border:1px solid #b9b9b9;background:#f0eeee"></div>
<div class="a" style="left:0px;top:0px;width:1px;height:766px;background:#2a78c2"></div>
<div class="a" style="left:1278px;top:0px;width:2px;height:766px;background:#1f6496"></div>
<div class="a" style="left:0px;top:765px;width:1280px;height:1px;background:#2a78c2"></div>
<div class="a" style="left:147px;top:523px;width:821px;height:6px;background:#f3f3f3"></div>
<div class="a" style="left:152px;top:528px;width:1126px;height:204px;background:#fff"></div>
<div class="a" style="left:430px;top:528px;width:6px;height:205px;background:#efefef"></div>
<div class="a" style="left:713px;top:528px;width:7px;height:205px;background:#efefef"></div>
<div class="a" style="left:994px;top:528px;width:7px;height:205px;background:#efefef"></div>
<svg style="left:0;top:0" width="1280" height="766" font-family="Liberation Sans">
<rect x="157" y="533" width="268.5" height="195" fill="#fff" stroke="#0f7b7b" stroke-width="2"/>
<line x1="199" y1="553.7" x2="332" y2="553.7" stroke="#ececec" stroke-width="1"/>
<text x="197" y="557.5" text-anchor="end" font-size="10" fill="#a8a8a8">1</text>
<line x1="374" y1="552.8" x2="418" y2="552.8" stroke="#ececec" stroke-width="1"/>
<text x="370.5" y="556.4" text-anchor="end" font-size="10" fill="#a8a8a8">1</text>
<line x1="199" y1="586.8" x2="332" y2="586.8" stroke="#ececec" stroke-width="1"/>
<text x="197" y="590.5999999999999" text-anchor="end" font-size="10" fill="#a8a8a8">0.5</text>
<line x1="374" y1="585.0" x2="418" y2="585.0" stroke="#ececec" stroke-width="1"/>
<text x="370.5" y="588.6" text-anchor="end" font-size="10" fill="#a8a8a8">0.5</text>
<line x1="199" y1="617" x2="332" y2="617" stroke="#ececec" stroke-width="1"/>
<text x="197" y="620.8" text-anchor="end" font-size="10" fill="#a8a8a8">0</text>
<line x1="374" y1="617.2" x2="418" y2="617.2" stroke="#ececec" stroke-width="1"/>
<text x="370.5" y="620.8" text-anchor="end" font-size="10" fill="#a8a8a8">0</text>
<line x1="199" y1="647.8" x2="332" y2="647.8" stroke="#ececec" stroke-width="1"/>
<text x="197" y="651.5999999999999" text-anchor="end" font-size="10" fill="#a8a8a8">-0.5</text>
<line x1="374" y1="649.4" x2="418" y2="649.4" stroke="#ececec" stroke-width="1"/>
<text x="370.5" y="653.0" text-anchor="end" font-size="10" fill="#a8a8a8">-0.5</text>
<line x1="199" y1="678.4" x2="332" y2="678.4" stroke="#ececec" stroke-width="1"/>
<text x="197" y="682.1999999999999" text-anchor="end" font-size="10" fill="#a8a8a8">-1</text>
<line x1="374" y1="681.6" x2="418" y2="681.6" stroke="#ececec" stroke-width="1"/>
<text x="370.5" y="685.2" text-anchor="end" font-size="10" fill="#a8a8a8">-1</text>
<line x1="205.2" y1="549" x2="205.2" y2="688" stroke="#ececec" stroke-width="1"/>
<text x="205.2" y="700.5" text-anchor="middle" font-size="10" fill="#a8a8a8">-1</text>
<line x1="235.4" y1="549" x2="235.4" y2="688" stroke="#ececec" stroke-width="1"/>
<text x="235.4" y="700.5" text-anchor="middle" font-size="10" fill="#a8a8a8">-0.5</text>
<line x1="265.3" y1="549" x2="265.3" y2="688" stroke="#ececec" stroke-width="1"/>
<text x="265.3" y="700.5" text-anchor="middle" font-size="10" fill="#a8a8a8">0</text>
<line x1="295.2" y1="549" x2="295.2" y2="688" stroke="#ececec" stroke-width="1"/>
<text x="295.2" y="700.5" text-anchor="middle" font-size="10" fill="#a8a8a8">0.5</text>
<line x1="324.7" y1="549" x2="324.7" y2="688" stroke="#ececec" stroke-width="1"/>
<text x="324.7" y="700.5" text-anchor="middle" font-size="10" fill="#a8a8a8">1</text>
<line x1="198.8" y1="617" x2="331.8" y2="617" stroke="#222" stroke-width="1.3"/>
<line x1="265.3" y1="549" x2="265.3" y2="684.5" stroke="#222" stroke-width="1.3"/>
<text x="265" y="709" text-anchor="middle" font-size="10" fill="#a8a8a8">Δa*</text>
<text transform="translate(175.5,617) rotate(-90)" text-anchor="middle" font-size="10" fill="#a8a8a8">Δb*</text>
<circle cx="263.5" cy="617.0" r="4.4" fill="#858585"/>
<circle cx="264.1" cy="627.7" r="4.4" fill="#858585"/>
<circle cx="262.3" cy="623.9" r="4.4" fill="#858585"/>
<circle cx="262.9" cy="628.3" r="4.4" fill="#858585"/>
<circle cx="267.1" cy="631.5" r="4.4" fill="#858585"/>
<circle cx="265.3" cy="628.3" r="4.4" fill="#858585"/>
<circle cx="263.5" cy="624.6" r="4.4" fill="#858585"/>
<circle cx="263.5" cy="626.5" r="4.4" fill="#858585"/>
<circle cx="265.9" cy="630.2" r="4.4" fill="#858585"/>
<circle cx="264.7" cy="629.0" r="4.4" fill="#858585"/>
<circle cx="268.3" cy="621.4" r="4.4" fill="#858585"/>
<line x1="397" y1="549" x2="397" y2="685" stroke="#555" stroke-width="1.5"/>
<text transform="translate(351.5,617) rotate(-90)" text-anchor="middle" font-size="10" fill="#a8a8a8">ΔL*</text>
<circle cx="397" cy="614.6" r="4.4" fill="#858585"/>
<circle cx="397" cy="650.7" r="4.4" fill="#858585"/>
<circle cx="397" cy="659.1" r="4.4" fill="#858585"/>
<circle cx="397" cy="662.9" r="4.4" fill="#858585"/>
<circle cx="397" cy="669.4" r="4.4" fill="#858585"/>
<circle cx="397" cy="661.6" r="4.4" fill="#858585"/>
<circle cx="397" cy="646.2" r="4.4" fill="#858585"/>
<circle cx="397" cy="643.0" r="4.4" fill="#858585"/>
<circle cx="397" cy="638.5" r="4.4" fill="#858585"/>
<circle cx="397" cy="650.0" r="4.4" fill="#858585"/>
<circle cx="397" cy="636.5" r="4.4" fill="#858585"/>
<line x1="461.5" y1="703.7" x2="701.5" y2="703.7" stroke="#ececec" stroke-width="1"/>
<text x="456.5" y="707.5" text-anchor="end" font-size="10" fill="#a8a8a8">0.0</text>
<line x1="461.5" y1="631.0" x2="701.5" y2="631.0" stroke="#ececec" stroke-width="1"/>
<text x="456.5" y="634.8" text-anchor="end" font-size="10" fill="#a8a8a8">0.5</text>
<line x1="461.5" y1="558.4" x2="701.5" y2="558.4" stroke="#ececec" stroke-width="1"/>
<text x="456.5" y="562.2" text-anchor="end" font-size="10" fill="#a8a8a8">1.0</text>
<line x1="463.4" y1="556" x2="463.4" y2="706" stroke="#ececec" stroke-width="1"/>
<text x="463.4" y="720.8" text-anchor="middle" font-size="10" fill="#a8a8a8">1</text>
<line x1="480.1" y1="556" x2="480.1" y2="706" stroke="#ececec" stroke-width="1"/>
<text x="480.1" y="720.8" text-anchor="middle" font-size="10" fill="#a8a8a8">2</text>
<line x1="496.8" y1="556" x2="496.8" y2="706" stroke="#ececec" stroke-width="1"/>
<text x="496.8" y="720.8" text-anchor="middle" font-size="10" fill="#a8a8a8">3</text>
<line x1="513.5" y1="556" x2="513.5" y2="706" stroke="#ececec" stroke-width="1"/>
<text x="513.5" y="720.8" text-anchor="middle" font-size="10" fill="#a8a8a8">4</text>
<line x1="530.2" y1="556" x2="530.2" y2="706" stroke="#ececec" stroke-width="1"/>
<text x="530.2" y="720.8" text-anchor="middle" font-size="10" fill="#a8a8a8">5</text>
<line x1="546.9" y1="556" x2="546.9" y2="706" stroke="#ececec" stroke-width="1"/>
<text x="546.9" y="720.8" text-anchor="middle" font-size="10" fill="#a8a8a8">6</text>
<line x1="563.6" y1="556" x2="563.6" y2="706" stroke="#ececec" stroke-width="1"/>
<text x="563.6" y="720.8" text-anchor="middle" font-size="10" fill="#a8a8a8">7</text>
<line x1="580.3" y1="556" x2="580.3" y2="706" stroke="#ececec" stroke-width="1"/>
<text x="580.3" y="720.8" text-anchor="middle" font-size="10" fill="#a8a8a8">8</text>
<line x1="597.1" y1="556" x2="597.1" y2="706" stroke="#ececec" stroke-width="1"/>
<text x="597.1" y="720.8" text-anchor="middle" font-size="10" fill="#a8a8a8">9</text>
<line x1="613.8" y1="556" x2="613.8" y2="706" stroke="#ececec" stroke-width="1"/>
<text x="613.8" y="720.8" text-anchor="middle" font-size="10" fill="#a8a8a8">10</text>
<line x1="630.5" y1="556" x2="630.5" y2="706" stroke="#ececec" stroke-width="1"/>
<text x="630.5" y="720.8" text-anchor="middle" font-size="10" fill="#a8a8a8">11</text>
<line x1="647.2" y1="556" x2="647.2" y2="706" stroke="#ececec" stroke-width="1"/>
<text x="647.2" y="720.8" text-anchor="middle" font-size="10" fill="#a8a8a8">12</text>
<line x1="663.9" y1="556" x2="663.9" y2="706" stroke="#ececec" stroke-width="1"/>
<text x="663.9" y="720.8" text-anchor="middle" font-size="10" fill="#a8a8a8">13</text>
<line x1="680.6" y1="556" x2="680.6" y2="706" stroke="#ececec" stroke-width="1"/>
<text x="680.6" y="720.8" text-anchor="middle" font-size="10" fill="#a8a8a8">14</text>
<line x1="697.3" y1="556" x2="697.3" y2="706" stroke="#ececec" stroke-width="1"/>
<text x="697.3" y="720.8" text-anchor="middle" font-size="10" fill="#a8a8a8">15</text>
<circle cx="553.4" cy="544.7" r="5.6" fill="#fff" stroke="#2a8ad4" stroke-width="2"/>
<text x="564.5" y="549" font-size="12" fill="#222">ΔE*ab</text>
<path d="M463.40,696.44 C468.97,667.62 474.54,638.80 480.11,623.78 C485.68,608.77 491.24,610.95 496.81,606.35 C502.38,601.75 507.95,600.29 513.52,596.18 C519.09,592.06 524.66,580.92 530.23,581.65 C535.80,582.37 541.37,591.58 546.93,600.54 C552.50,609.50 558.07,628.63 563.64,635.41 C569.21,642.19 574.78,639.28 580.35,641.22 C585.92,643.16 591.49,649.70 597.06,647.03 C602.62,644.37 608.19,623.54 613.76,625.24 C619.33,626.93 624.90,642.07 630.47,657.20" fill="none" stroke="#2a8ad4" stroke-width="2"/>
<circle cx="463.40" cy="696.44" r="3.6" fill="#fff" stroke="#2a8ad4" stroke-width="1.8"/>
<circle cx="480.11" cy="623.78" r="3.6" fill="#fff" stroke="#2a8ad4" stroke-width="1.8"/>
<circle cx="496.81" cy="606.35" r="3.6" fill="#fff" stroke="#2a8ad4" stroke-width="1.8"/>
<circle cx="513.52" cy="596.18" r="3.6" fill="#fff" stroke="#2a8ad4" stroke-width="1.8"/>
<circle cx="530.23" cy="581.65" r="3.6" fill="#fff" stroke="#2a8ad4" stroke-width="1.8"/>
<circle cx="546.93" cy="600.54" r="3.6" fill="#fff" stroke="#2a8ad4" stroke-width="1.8"/>
<circle cx="563.64" cy="635.41" r="3.6" fill="#fff" stroke="#2a8ad4" stroke-width="1.8"/>
<circle cx="580.35" cy="641.22" r="3.6" fill="#fff" stroke="#2a8ad4" stroke-width="1.8"/>
<circle cx="597.06" cy="647.03" r="3.6" fill="#fff" stroke="#2a8ad4" stroke-width="1.8"/>
<circle cx="613.76" cy="625.24" r="3.6" fill="#fff" stroke="#2a8ad4" stroke-width="1.8"/>
<circle cx="630.47" cy="657.20" r="3.6" fill="#fff" stroke="#2a8ad4" stroke-width="1.8"/>
<line x1="753" y1="673.0" x2="980.8" y2="673.0" stroke="#ececec" stroke-width="1"/>
<text x="748.5" y="676.8" text-anchor="end" font-size="10" fill="#a8a8a8">0</text>
<line x1="753" y1="646.7" x2="980.8" y2="646.7" stroke="#ececec" stroke-width="1"/>
<text x="748.5" y="650.5" text-anchor="end" font-size="10" fill="#a8a8a8">2</text>
<line x1="753" y1="620.4" x2="980.8" y2="620.4" stroke="#ececec" stroke-width="1"/>
<text x="748.5" y="624.2" text-anchor="end" font-size="10" fill="#a8a8a8">4</text>
<line x1="753" y1="594.0" x2="980.8" y2="594.0" stroke="#ececec" stroke-width="1"/>
<text x="748.5" y="597.8" text-anchor="end" font-size="10" fill="#a8a8a8">6</text>
<line x1="753" y1="567.7" x2="980.8" y2="567.7" stroke="#ececec" stroke-width="1"/>
<text x="748.5" y="571.5" text-anchor="end" font-size="10" fill="#a8a8a8">8</text>
<line x1="753" y1="541.4" x2="980.8" y2="541.4" stroke="#ececec" stroke-width="1"/>
<text x="748.5" y="545.2" text-anchor="end" font-size="10" fill="#a8a8a8">10</text>
<line x1="753.0" y1="541.4" x2="753.0" y2="673" stroke="#ececec" stroke-width="1"/>
<text x="753.0" y="688.5" text-anchor="middle" font-size="10" fill="#a8a8a8">400</text>
<line x1="791.0" y1="541.4" x2="791.0" y2="673" stroke="#ececec" stroke-width="1"/>
<text x="791.0" y="688.5" text-anchor="middle" font-size="10" fill="#a8a8a8">450</text>
<line x1="828.9" y1="541.4" x2="828.9" y2="673" stroke="#ececec" stroke-width="1"/>
<text x="828.9" y="688.5" text-anchor="middle" font-size="10" fill="#a8a8a8">500</text>
<line x1="866.9" y1="541.4" x2="866.9" y2="673" stroke="#ececec" stroke-width="1"/>
<text x="866.9" y="688.5" text-anchor="middle" font-size="10" fill="#a8a8a8">550</text>
<line x1="904.9" y1="541.4" x2="904.9" y2="673" stroke="#ececec" stroke-width="1"/>
<text x="904.9" y="688.5" text-anchor="middle" font-size="10" fill="#a8a8a8">600</text>
<line x1="942.8" y1="541.4" x2="942.8" y2="673" stroke="#ececec" stroke-width="1"/>
<text x="942.8" y="688.5" text-anchor="middle" font-size="10" fill="#a8a8a8">650</text>
<line x1="980.8" y1="541.4" x2="980.8" y2="673" stroke="#ececec" stroke-width="1"/>
<text x="980.8" y="688.5" text-anchor="middle" font-size="10" fill="#a8a8a8">700</text>
<text transform="translate(735.5,607) rotate(-90)" text-anchor="middle" font-size="9.5" fill="#a8a8a8">R%</text>
<path d="M753,673 L753.0,636.3 L791.0,637.2 L828.9,638.3 L866.9,639.3 L904.9,640.2 L942.8,640.9 L980.8,641.8 L980.8,673 Z" fill="#7b9c93"/>
<path d="M753.0,635.5 L791.0,636.4 L828.9,637.5 L866.9,638.5 L904.9,639.4 L942.8,640.1 L980.8,641.0" fill="none" stroke="#4848a8" stroke-width="1.3"/>
<defs><linearGradient id="spec" x1="0" y1="0" x2="1" y2="0"><stop offset="0" stop-color="#ff00ff"/><stop offset=".225" stop-color="#ff00ff"/><stop offset=".228" stop-color="#2040ff"/><stop offset=".245" stop-color="#00ffff"/><stop offset=".33" stop-color="#00ffff"/><stop offset=".37" stop-color="#00ff00"/><stop offset=".52" stop-color="#00ff00"/><stop offset=".6" stop-color="#ffe000"/><stop offset=".67" stop-color="#ff8000"/><stop offset=".7" stop-color="#ff0000"/><stop offset="1" stop-color="#ff0000"/></linearGradient></defs>
<rect x="753" y="706.5" width="228" height="19.2" fill="url(#spec)"/>
<line x1="1086.2" y1="572" x2="1086.2" y2="674" stroke="#ececec" stroke-width="1"/>
<line x1="1080" y1="666.4" x2="1215" y2="666.4" stroke="#ececec" stroke-width="1"/>
<text x="1086.2" y="688.5" text-anchor="middle" font-size="10" fill="#a8a8a8">-100</text>
<text x="1219" y="670.2" font-size="10" fill="#a8a8a8">-100</text>
<line x1="1116.6" y1="572" x2="1116.6" y2="674" stroke="#ececec" stroke-width="1"/>
<line x1="1080" y1="644.8" x2="1215" y2="644.8" stroke="#ececec" stroke-width="1"/>
<text x="1116.6" y="688.5" text-anchor="middle" font-size="10" fill="#a8a8a8">-50</text>
<text x="1219" y="648.5" font-size="10" fill="#a8a8a8">-50</text>
<line x1="1147.0" y1="572" x2="1147.0" y2="674" stroke="#ececec" stroke-width="1"/>
<line x1="1080" y1="623.1" x2="1215" y2="623.1" stroke="#ececec" stroke-width="1"/>
<text x="1147.0" y="688.5" text-anchor="middle" font-size="10" fill="#a8a8a8">0</text>
<text x="1219" y="626.9" font-size="10" fill="#a8a8a8">0</text>
<line x1="1177.4" y1="572" x2="1177.4" y2="674" stroke="#ececec" stroke-width="1"/>
<line x1="1080" y1="601.5" x2="1215" y2="601.5" stroke="#ececec" stroke-width="1"/>
<text x="1177.4" y="688.5" text-anchor="middle" font-size="10" fill="#a8a8a8">50</text>
<text x="1219" y="605.2" font-size="10" fill="#a8a8a8">50</text>
<line x1="1207.8" y1="572" x2="1207.8" y2="674" stroke="#ececec" stroke-width="1"/>
<line x1="1080" y1="579.8" x2="1215" y2="579.8" stroke="#ececec" stroke-width="1"/>
<text x="1207.8" y="688.5" text-anchor="middle" font-size="10" fill="#a8a8a8">100</text>
<text x="1219" y="583.6" font-size="10" fill="#a8a8a8">100</text>
<text x="1056.6" y="670.5" text-anchor="end" font-size="10" fill="#a8a8a8">0</text>
<text x="1056.6" y="650.8" text-anchor="end" font-size="10" fill="#a8a8a8">20</text>
<text x="1056.6" y="631.1" text-anchor="end" font-size="10" fill="#a8a8a8">40</text>
<text x="1056.6" y="611.5" text-anchor="end" font-size="10" fill="#a8a8a8">60</text>
<text x="1056.6" y="591.8" text-anchor="end" font-size="10" fill="#a8a8a8">80</text>
<text x="1056.6" y="572.1" text-anchor="end" font-size="10" fill="#a8a8a8">100</text>
<defs><linearGradient id="lg" x1="0" y1="0" x2="0" y2="1"><stop offset="0" stop-color="#fff"/><stop offset="1" stop-color="#000"/></linearGradient></defs>
<rect x="1060.7" y="567.5" width="9.3" height="99.5" fill="url(#lg)"/>
<text transform="translate(1036.5,617.2) rotate(-90)" text-anchor="middle" font-size="9.5" fill="#a8a8a8">L*</text>
<text transform="translate(1249.5,624) rotate(-90)" text-anchor="middle" font-size="9.5" fill="#a8a8a8">b*</text>
<text x="1147" y="697" text-anchor="middle" font-size="10" fill="#a8a8a8">a*</text>
<defs><clipPath id="oct"><path d="M1147,580 L1190,592 L1208,623 L1190,653 L1147,666.4 L1104.6,653 L1086.5,623 L1104.6,592 Z"/></clipPath><radialGradient id="wc" cx="1147" cy="623" r="62" gradientUnits="userSpaceOnUse"><stop offset="0" stop-color="#fff" stop-opacity="1"/><stop offset=".3" stop-color="#fff" stop-opacity=".6"/><stop offset=".75" stop-color="#fff" stop-opacity=".05"/><stop offset="1" stop-color="#fff" stop-opacity="0"/></radialGradient></defs>
<g clip-path="url(#oct)">
<path d="M1147,623.1 L1227.0,623.1 L1226.6,615.4 Z" fill="#ff3650" stroke="#ff3650" stroke-width="0.8"/>
<path d="M1147,623.1 L1226.7,616.1 L1225.7,608.5 Z" fill="#ff4250" stroke="#ff4250" stroke-width="0.8"/>
<path d="M1147,623.1 L1225.8,609.2 L1224.1,601.7 Z" fill="#ff4d50" stroke="#ff4d50" stroke-width="0.8"/>
<path d="M1147,623.1 L1224.3,602.4 L1221.9,595.1 Z" fill="#ff5950" stroke="#ff5950" stroke-width="0.8"/>
<path d="M1147,623.1 L1222.2,595.7 L1219.2,588.7 Z" fill="#ff6550" stroke="#ff6550" stroke-width="0.8"/>
<path d="M1147,623.1 L1219.5,589.3 L1215.9,582.5 Z" fill="#ff7150" stroke="#ff7150" stroke-width="0.8"/>
<path d="M1147,623.1 L1216.3,583.1 L1212.1,576.6 Z" fill="#ff7d50" stroke="#ff7d50" stroke-width="0.8"/>
<path d="M1147,623.1 L1212.5,577.2 L1207.8,571.1 Z" fill="#ff8850" stroke="#ff8850" stroke-width="0.8"/>
<path d="M1147,623.1 L1208.3,571.7 L1203.1,566.0 Z" fill="#ff9450" stroke="#ff9450" stroke-width="0.8"/>
<path d="M1147,623.1 L1203.6,566.5 L1197.9,561.4 Z" fill="#ff9f4f" stroke="#ff9f4f" stroke-width="0.8"/>
<path d="M1147,623.1 L1198.4,561.8 L1192.3,557.2 Z" fill="#ffa84d" stroke="#ffa84d" stroke-width="0.8"/>
<path d="M1147,623.1 L1192.9,557.6 L1186.4,553.5 Z" fill="#ffb24c" stroke="#ffb24c" stroke-width="0.8"/>
<path d="M1147,623.1 L1187.0,553.8 L1180.2,550.3 Z" fill="#ffbb4a" stroke="#ffbb4a" stroke-width="0.8"/>
<path d="M1147,623.1 L1180.8,550.6 L1173.7,547.7 Z" fill="#ffc548" stroke="#ffc548" stroke-width="0.8"/>
<path d="M1147,623.1 L1174.4,547.9 L1167.0,545.6 Z" fill="#ffcf46" stroke="#ffcf46" stroke-width="0.8"/>
<path d="M1147,623.1 L1167.7,545.8 L1160.2,544.2 Z" fill="#ffd844" stroke="#ffd844" stroke-width="0.8"/>
<path d="M1147,623.1 L1160.9,544.3 L1153.3,543.3 Z" fill="#ffe243" stroke="#ffe243" stroke-width="0.8"/>
<path d="M1147,623.1 L1154.0,543.4 L1146.3,543.1 Z" fill="#ffeb41" stroke="#ffeb41" stroke-width="0.8"/>
<path d="M1147,623.1 L1147.0,543.1 L1139.3,543.5 Z" fill="#faef40" stroke="#faef40" stroke-width="0.8"/>
<path d="M1147,623.1 L1140.0,543.4 L1132.4,544.4 Z" fill="#efec40" stroke="#efec40" stroke-width="0.8"/>
<path d="M1147,623.1 L1133.1,544.3 L1125.6,546.0 Z" fill="#e5e940" stroke="#e5e940" stroke-width="0.8"/>
<path d="M1147,623.1 L1126.3,545.8 L1119.0,548.2 Z" fill="#dae740" stroke="#dae740" stroke-width="0.8"/>
<path d="M1147,623.1 L1119.6,547.9 L1112.6,550.9 Z" fill="#d0e440" stroke="#d0e440" stroke-width="0.8"/>
<path d="M1147,623.1 L1113.2,550.6 L1106.4,554.2 Z" fill="#c5e140" stroke="#c5e140" stroke-width="0.8"/>
<path d="M1147,623.1 L1107.0,553.8 L1100.5,558.0 Z" fill="#badf40" stroke="#badf40" stroke-width="0.8"/>
<path d="M1147,623.1 L1101.1,557.6 L1095.0,562.3 Z" fill="#b0dc40" stroke="#b0dc40" stroke-width="0.8"/>
<path d="M1147,623.1 L1095.6,561.8 L1089.9,567.0 Z" fill="#a5d940" stroke="#a5d940" stroke-width="0.8"/>
<path d="M1147,623.1 L1090.4,566.5 L1085.3,572.2 Z" fill="#9ad43f" stroke="#9ad43f" stroke-width="0.8"/>
<path d="M1147,623.1 L1085.7,571.7 L1081.1,577.8 Z" fill="#8dcb3d" stroke="#8dcb3d" stroke-width="0.8"/>
<path d="M1147,623.1 L1081.5,577.2 L1077.4,583.7 Z" fill="#81c23b" stroke="#81c23b" stroke-width="0.8"/>
<path d="M1147,623.1 L1077.7,583.1 L1074.2,589.9 Z" fill="#74ba39" stroke="#74ba39" stroke-width="0.8"/>
<path d="M1147,623.1 L1074.5,589.3 L1071.6,596.4 Z" fill="#68b138" stroke="#68b138" stroke-width="0.8"/>
<path d="M1147,623.1 L1071.8,595.7 L1069.5,603.1 Z" fill="#5ba836" stroke="#5ba836" stroke-width="0.8"/>
<path d="M1147,623.1 L1069.7,602.4 L1068.1,609.9 Z" fill="#4ea034" stroke="#4ea034" stroke-width="0.8"/>
<path d="M1147,623.1 L1068.2,609.2 L1067.2,616.8 Z" fill="#429732" stroke="#429732" stroke-width="0.8"/>
<path d="M1147,623.1 L1067.3,616.1 L1067.0,623.8 Z" fill="#358e30" stroke="#358e30" stroke-width="0.8"/>
<path d="M1147,623.1 L1067.0,623.1 L1067.4,630.8 Z" fill="#2f903a" stroke="#2f903a" stroke-width="0.8"/>
<path d="M1147,623.1 L1067.3,630.1 L1068.3,637.7 Z" fill="#2f9b4f" stroke="#2f9b4f" stroke-width="0.8"/>
<path d="M1147,623.1 L1068.2,637.0 L1069.9,644.5 Z" fill="#2fa664" stroke="#2fa664" stroke-width="0.8"/>
<path d="M1147,623.1 L1069.7,643.8 L1072.1,651.1 Z" fill="#2fb179" stroke="#2fb179" stroke-width="0.8"/>
<path d="M1147,623.1 L1071.8,650.5 L1074.8,657.5 Z" fill="#30bc8e" stroke="#30bc8e" stroke-width="0.8"/>
<path d="M1147,623.1 L1074.5,656.9 L1078.1,663.7 Z" fill="#30c7a4" stroke="#30c7a4" stroke-width="0.8"/>
<path d="M1147,623.1 L1077.7,663.1 L1081.9,669.6 Z" fill="#30d2b9" stroke="#30d2b9" stroke-width="0.8"/>
<path d="M1147,623.1 L1081.5,669.0 L1086.2,675.1 Z" fill="#30ddce" stroke="#30ddce" stroke-width="0.8"/>
<path d="M1147,623.1 L1085.7,674.5 L1090.9,680.2 Z" fill="#30e8e3" stroke="#30e8e3" stroke-width="0.8"/>
<path d="M1147,623.1 L1090.4,679.7 L1096.1,684.8 Z" fill="#30e4ee" stroke="#30e4ee" stroke-width="0.8"/>
<path d="M1147,623.1 L1095.6,684.4 L1101.7,689.0 Z" fill="#31cfee" stroke="#31cfee" stroke-width="0.8"/>
<path d="M1147,623.1 L1101.1,688.6 L1107.6,692.7 Z" fill="#31bbef" stroke="#31bbef" stroke-width="0.8"/>
<path d="M1147,623.1 L1107.0,692.4 L1113.8,695.9 Z" fill="#32a6ef" stroke="#32a6ef" stroke-width="0.8"/>
<path d="M1147,623.1 L1113.2,695.6 L1120.3,698.5 Z" fill="#3292ef" stroke="#3292ef" stroke-width="0.8"/>
<path d="M1147,623.1 L1119.6,698.3 L1127.0,700.6 Z" fill="#337def" stroke="#337def" stroke-width="0.8"/>
<path d="M1147,623.1 L1126.3,700.4 L1133.8,702.0 Z" fill="#3468ef" stroke="#3468ef" stroke-width="0.8"/>
<path d="M1147,623.1 L1133.1,701.9 L1140.7,702.9 Z" fill="#3454f0" stroke="#3454f0" stroke-width="0.8"/>
<path d="M1147,623.1 L1140.0,702.8 L1147.7,703.1 Z" fill="#353ff0" stroke="#353ff0" stroke-width="0.8"/>
<path d="M1147,623.1 L1147.0,703.1 L1154.7,702.7 Z" fill="#3b36ec" stroke="#3b36ec" stroke-width="0.8"/>
<path d="M1147,623.1 L1154.0,702.8 L1161.6,701.8 Z" fill="#4737e5" stroke="#4737e5" stroke-width="0.8"/>
<path d="M1147,623.1 L1160.9,701.9 L1168.4,700.2 Z" fill="#5338de" stroke="#5338de" stroke-width="0.8"/>
<path d="M1147,623.1 L1167.7,700.4 L1175.0,698.0 Z" fill="#5f39d7" stroke="#5f39d7" stroke-width="0.8"/>
<path d="M1147,623.1 L1174.4,698.3 L1181.4,695.3 Z" fill="#6a3ad0" stroke="#6a3ad0" stroke-width="0.8"/>
<path d="M1147,623.1 L1180.8,695.6 L1187.6,692.0 Z" fill="#763cc9" stroke="#763cc9" stroke-width="0.8"/>
<path d="M1147,623.1 L1187.0,692.4 L1193.5,688.2 Z" fill="#823dc2" stroke="#823dc2" stroke-width="0.8"/>
<path d="M1147,623.1 L1192.9,688.6 L1199.0,683.9 Z" fill="#8e3ebb" stroke="#8e3ebb" stroke-width="0.8"/>
<path d="M1147,623.1 L1198.4,684.4 L1204.1,679.2 Z" fill="#9a3fb4" stroke="#9a3fb4" stroke-width="0.8"/>
<path d="M1147,623.1 L1203.6,679.7 L1208.7,674.0 Z" fill="#a53fab" stroke="#a53fab" stroke-width="0.8"/>
<path d="M1147,623.1 L1208.3,674.5 L1212.9,668.4 Z" fill="#b03da0" stroke="#b03da0" stroke-width="0.8"/>
<path d="M1147,623.1 L1212.5,669.0 L1216.6,662.5 Z" fill="#ba3c95" stroke="#ba3c95" stroke-width="0.8"/>
<path d="M1147,623.1 L1216.3,663.1 L1219.8,656.3 Z" fill="#c53a8b" stroke="#c53a8b" stroke-width="0.8"/>
<path d="M1147,623.1 L1219.5,656.9 L1222.4,649.8 Z" fill="#d03880" stroke="#d03880" stroke-width="0.8"/>
<path d="M1147,623.1 L1222.2,650.5 L1224.5,643.1 Z" fill="#da3675" stroke="#da3675" stroke-width="0.8"/>
<path d="M1147,623.1 L1224.3,643.8 L1225.9,636.3 Z" fill="#e5346b" stroke="#e5346b" stroke-width="0.8"/>
<path d="M1147,623.1 L1225.8,637.0 L1226.8,629.4 Z" fill="#ef3360" stroke="#ef3360" stroke-width="0.8"/>
<path d="M1147,623.1 L1226.7,630.1 L1227.0,622.4 Z" fill="#fa3155" stroke="#fa3155" stroke-width="0.8"/>
<rect x="1080" y="570" width="140" height="110" fill="url(#wc)"/>
</g>
<line x1="1080" y1="623" x2="1214.8" y2="623" stroke="#111" stroke-width="1.3"/>
<line x1="1147" y1="573.8" x2="1147" y2="673" stroke="#111" stroke-width="1.3"/>
<path d="M1146.8,616.8 L1153.2,623.3 L1146.8,629.8 L1140.4,623.3 Z" fill="#0000e0"/>
<circle cx="1147.5" cy="623" r="5.3" fill="#66e000"/>
<path d="M1120.2,558 L1126.4,564.2 L1120.2,570.4 L1114,564.2 Z" fill="#0000e0"/>
<circle cx="1171" cy="564.2" r="6.5" fill="#66e000"/>
</svg>
<div class="t" style="left:826px;top:687.5px;width:80px;text-align:center;font-size:10px;color:#a8a8a8"><span class="c">波</span><span class="c">长</span>(nm)</div>
<div class="t" style="left:1131px;top:558.5px;color:#222"><span class="c">标</span><span class="c">样</span></div>
<div class="t" style="left:1182px;top:558.5px;color:#222"><span class="c">试</span><span class="c">样</span></div>
</body></html>
